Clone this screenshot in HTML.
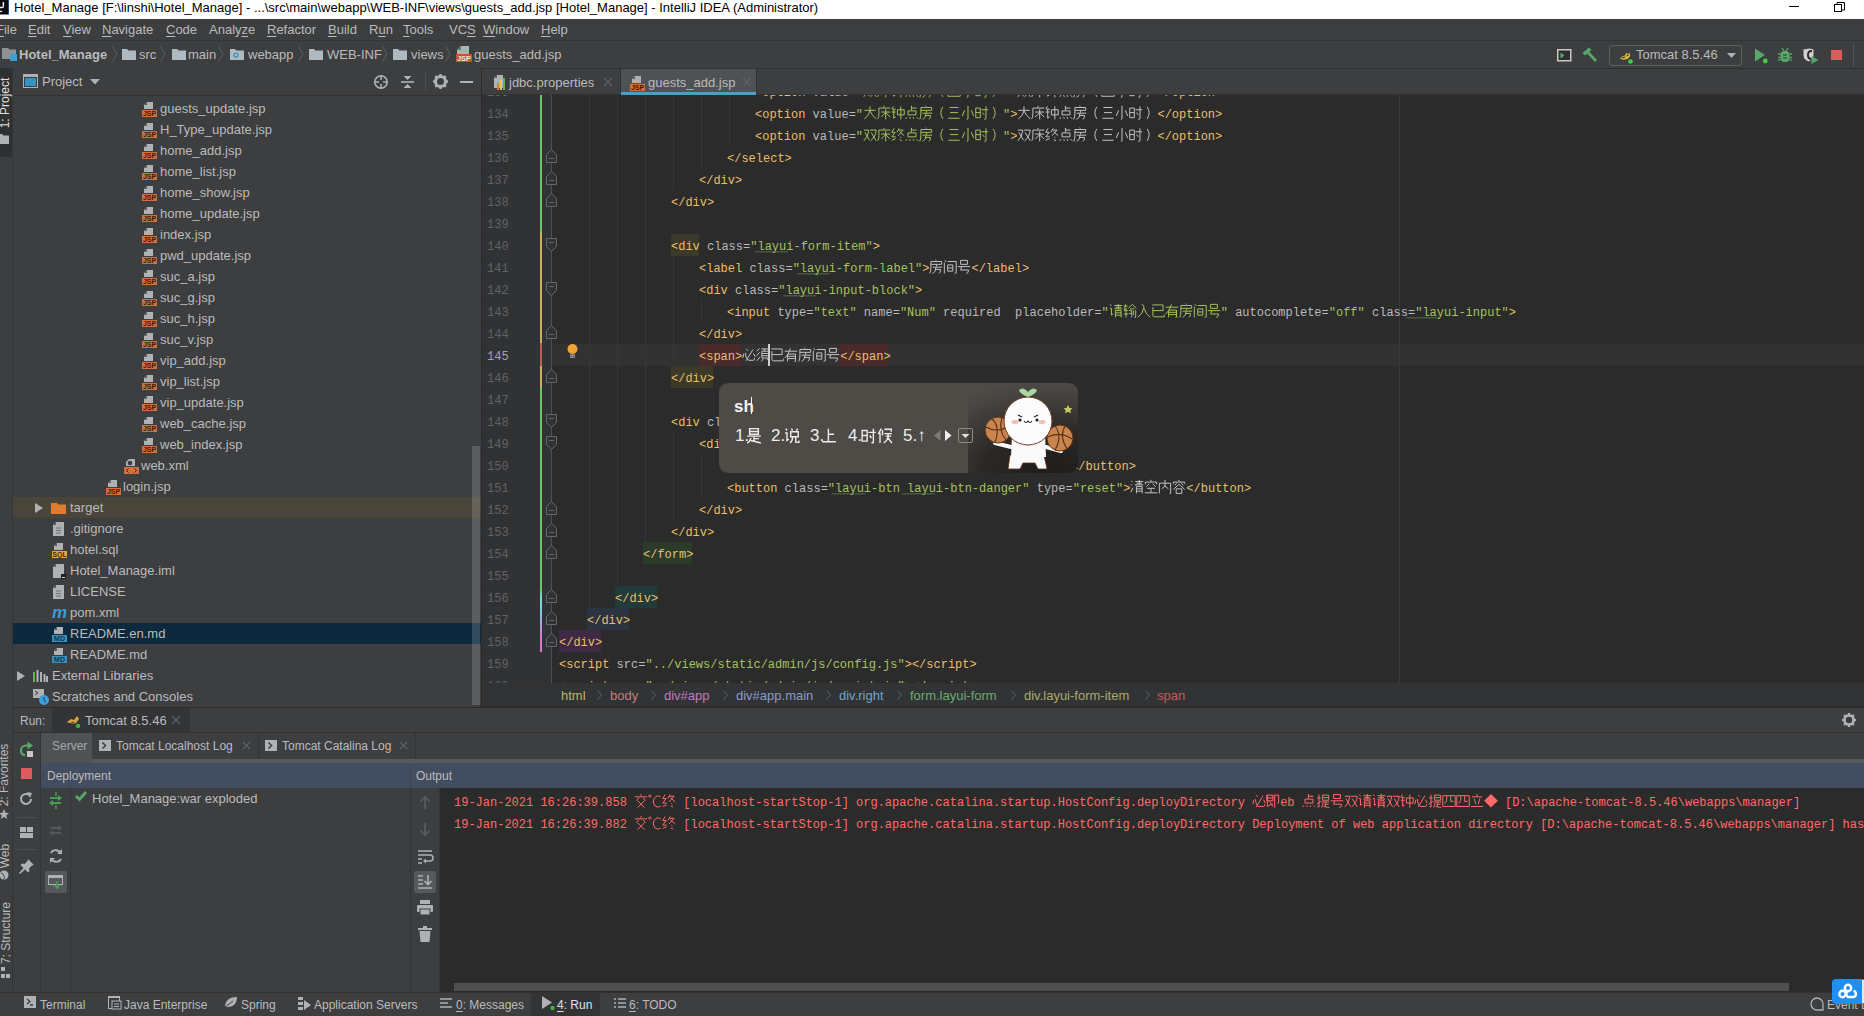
<!DOCTYPE html><html><head><meta charset="utf-8"><style>
*{margin:0;padding:0;box-sizing:border-box}
html,body{width:1864px;height:1016px;overflow:hidden;background:#3D3E40;font-family:"Liberation Sans",sans-serif;font-size:13px;color:#BBBBBB}
.a{position:absolute;white-space:pre}
.m{font-family:"Liberation Mono",monospace}
.u{text-decoration:underline;text-underline-offset:2px}
svg{position:absolute;overflow:visible}
svg.g{position:static;display:inline-block;vertical-align:top}
</style></head><body><div class="a" style="left:0px;top:0px;width:1864px;height:19px;background:#FFFFFF;"></div>
<svg style="left:0px;top:0px" width="9" height="15" viewBox="0 0 9 15"><rect x="-6" y="0" width="14.5" height="14.5" fill="#0A0A10"/><rect x="8" y="0" width="1" height="14.5" fill="#2A4A8A"/><path d="M3.4 2v4.5Q3.4 7.5 1.8 7.5H0" stroke="#F0F0F0" stroke-width="1.4" fill="none"/><rect x="0" y="10.8" width="2.2" height="1.3" fill="#F0F0F0"/></svg>
<div class="a" style="left:14px;top:-1px;font-size:13px;line-height:17px;color:#000000;">Hotel_Manage [F:\linshi\Hotel_Manage] - ...\src\main\webapp\WEB-INF\views\guests_add.jsp [Hotel_Manage] - IntelliJ IDEA (Administrator)</div>
<div class="a" style="left:1789px;top:6px;width:10px;height:1px;background:#000;"></div>
<svg style="left:1834px;top:1px" width="12" height="12" viewBox="0 0 12 12"><rect x="0.5" y="3.5" width="7" height="7" fill="none" stroke="#000"/><path d="M3 3.5V1.5h7.5V9H8" fill="none" stroke="#000"/></svg>
<div class="a" style="left:0px;top:19px;width:1864px;height:22px;background:#3D3E40;"></div>
<div class="a" style="left:0px;top:40px;width:1864px;height:1px;background:#333435;"></div>
<div class="a" style="left:-4px;top:21px;font-size:13px;line-height:17px;color:#BBBBBB;"><span class="u">F</span>ile</div>
<div class="a" style="left:28px;top:21px;font-size:13px;line-height:17px;color:#BBBBBB;"><span class="u">E</span>dit</div>
<div class="a" style="left:63px;top:21px;font-size:13px;line-height:17px;color:#BBBBBB;"><span class="u">V</span>iew</div>
<div class="a" style="left:102px;top:21px;font-size:13px;line-height:17px;color:#BBBBBB;"><span class="u">N</span>avigate</div>
<div class="a" style="left:166px;top:21px;font-size:13px;line-height:17px;color:#BBBBBB;"><span class="u">C</span>ode</div>
<div class="a" style="left:209px;top:21px;font-size:13px;line-height:17px;color:#BBBBBB;">Analy<span class="u">z</span>e</div>
<div class="a" style="left:267px;top:21px;font-size:13px;line-height:17px;color:#BBBBBB;"><span class="u">R</span>efactor</div>
<div class="a" style="left:328px;top:21px;font-size:13px;line-height:17px;color:#BBBBBB;"><span class="u">B</span>uild</div>
<div class="a" style="left:369px;top:21px;font-size:13px;line-height:17px;color:#BBBBBB;">R<span class="u">u</span>n</div>
<div class="a" style="left:403px;top:21px;font-size:13px;line-height:17px;color:#BBBBBB;"><span class="u">T</span>ools</div>
<div class="a" style="left:449px;top:21px;font-size:13px;line-height:17px;color:#BBBBBB;">VC<span class="u">S</span></div>
<div class="a" style="left:483px;top:21px;font-size:13px;line-height:17px;color:#BBBBBB;"><span class="u">W</span>indow</div>
<div class="a" style="left:541px;top:21px;font-size:13px;line-height:17px;color:#BBBBBB;"><span class="u">H</span>elp</div>
<div class="a" style="left:0px;top:41px;width:1864px;height:27px;background:#3D3E40;"></div>
<div class="a" style="left:0px;top:68px;width:1864px;height:1px;background:#323232;"></div>
<svg style="left:2px;top:47px" width="16" height="15" viewBox="0 0 16 15"><path d="M0 1h6l1.5 1.5H14V12H0z" fill="#8C9296"/><rect x="8" y="7" width="7" height="7" fill="#3BA0D8"/></svg>
<div class="a" style="left:19px;top:46px;font-size:13px;line-height:17px;color:#BBBBBB;font-weight:bold">Hotel_Manage</div>
<svg style="left:112px;top:46px" width="6" height="16" viewBox="0 0 6 16"><path d="M0.5 0.5L5 8L0.5 15.5" stroke="#5E6163" stroke-width="1" fill="none"/></svg>
<svg style="left:122px;top:48px" width="14" height="12" viewBox="0 0 14 12"><path d="M0 1h5l1.5 1.5H14V12H0z" fill="#AEB9C0"/></svg>
<div class="a" style="left:139px;top:46px;font-size:13px;line-height:17px;color:#BBBBBB;">src</div>
<svg style="left:160px;top:46px" width="6" height="16" viewBox="0 0 6 16"><path d="M0.5 0.5L5 8L0.5 15.5" stroke="#5E6163" stroke-width="1" fill="none"/></svg>
<svg style="left:172px;top:48px" width="14" height="12" viewBox="0 0 14 12"><path d="M0 1h5l1.5 1.5H14V12H0z" fill="#AEB9C0"/></svg>
<div class="a" style="left:188px;top:46px;font-size:13px;line-height:17px;color:#BBBBBB;">main</div>
<svg style="left:218px;top:46px" width="6" height="16" viewBox="0 0 6 16"><path d="M0.5 0.5L5 8L0.5 15.5" stroke="#5E6163" stroke-width="1" fill="none"/></svg>
<svg style="left:230px;top:48px" width="14" height="12" viewBox="0 0 14 12"><path d="M0 1h5l1.5 1.5H14V12H0z" fill="#AEB9C0"/><circle cx="6" cy="7" r="2.6" fill="#3592C4" stroke="#AEB9C0" stroke-width="0"/><circle cx="6" cy="7" r="1.3" fill="#AEB9C0"/></svg>
<div class="a" style="left:248px;top:46px;font-size:13px;line-height:17px;color:#BBBBBB;">webapp</div>
<svg style="left:298px;top:46px" width="6" height="16" viewBox="0 0 6 16"><path d="M0.5 0.5L5 8L0.5 15.5" stroke="#5E6163" stroke-width="1" fill="none"/></svg>
<svg style="left:309px;top:48px" width="14" height="12" viewBox="0 0 14 12"><path d="M0 1h5l1.5 1.5H14V12H0z" fill="#AEB9C0"/></svg>
<div class="a" style="left:327px;top:46px;font-size:13px;line-height:17px;color:#BBBBBB;">WEB-INF</div>
<svg style="left:382px;top:46px" width="6" height="16" viewBox="0 0 6 16"><path d="M0.5 0.5L5 8L0.5 15.5" stroke="#5E6163" stroke-width="1" fill="none"/></svg>
<svg style="left:393px;top:48px" width="14" height="12" viewBox="0 0 14 12"><path d="M0 1h5l1.5 1.5H14V12H0z" fill="#AEB9C0"/></svg>
<div class="a" style="left:411px;top:46px;font-size:13px;line-height:17px;color:#BBBBBB;">views</div>
<svg style="left:445px;top:46px" width="6" height="16" viewBox="0 0 6 16"><path d="M0.5 0.5L5 8L0.5 15.5" stroke="#5E6163" stroke-width="1" fill="none"/></svg>
<svg style="left:456px;top:46px" width="16" height="16" viewBox="0 0 16 16"><path d="M5 0h8v8H1V4z" fill="#AFB1B3"/><path d="M5 0v4H1z" fill="#6E6E6E"/><rect x="0" y="8" width="16" height="8" fill="#C7522A"/><text x="8" y="15" font-family="Liberation Sans" font-size="7.5" font-weight="bold" fill="#E8E8E8" text-anchor="middle">JSP</text></svg>
<div class="a" style="left:474px;top:46px;font-size:13px;line-height:17px;color:#BBBBBB;">guests_add.jsp</div>
<svg style="left:1557px;top:49px" width="15" height="13" viewBox="0 0 15 13"><rect x="0.75" y="0.75" width="13" height="11" fill="#2F3031" stroke="#C8C8C8" stroke-width="1.5"/><path d="M3.5 3.5l4 3-4 3z" fill="#59A869"/></svg>
<svg style="left:1582px;top:47px" width="16" height="16" viewBox="0 0 16 16"><path d="M0.5 6L7 0.5 9.5 3 3 8.5z" fill="#59A869"/><path d="M5 6.5L7 4.5 15 13 13 15z" fill="#59A869"/></svg>
<div class="a" style="left:1609px;top:45px;width:133px;height:21px;border:1px solid #5E6060;border-radius:3px"></div>
<svg style="left:1618px;top:49px" width="16" height="15" viewBox="0 0 16 15"><path d="M2 9.5Q4 7 7 6.5L8.5 3.5 10 5.5 12 3.5 12 7.5Q10.5 10 7 10.5 4 11 2 9.5z" fill="#D8B84A"/><path d="M4 9l3-1M8.5 7l2-1" stroke="#2A2010" stroke-width="1"/><circle cx="12.5" cy="12.5" r="2.3" fill="#3BD33B"/></svg>
<div class="a" style="left:1636px;top:46px;font-size:13px;line-height:17px;color:#BBBBBB;">Tomcat 8.5.46</div>
<svg style="left:1727px;top:53px" width="9" height="6" viewBox="0 0 9 6"><path d="M0 0h9L4.5 5z" fill="#AFB1B3"/></svg>
<svg style="left:1754px;top:48px" width="14" height="16" viewBox="0 0 14 16"><path d="M1 0.5l10 6.5-10 6.5z" fill="#59A869"/><circle cx="11.3" cy="13" r="2.4" fill="#3BD33B"/></svg>
<svg style="left:1778px;top:47px" width="14" height="16" viewBox="0 0 14 16"><path d="M4 1l2 3M10 1L8 4" stroke="#59A869" stroke-width="1.3"/><rect x="2.5" y="4" width="9" height="11" rx="4" fill="#59A869"/><path d="M0 7h2.5M11.5 7H14M0 10.5h2.5M11.5 10.5H14M0 13.5l2.5-1M14 13.5l-2.5-1" stroke="#59A869" stroke-width="1.3"/><path d="M5 8h4M5 11h4" stroke="#2F3031" stroke-width="1.2"/></svg>
<svg style="left:1803px;top:48px" width="17" height="16" viewBox="0 0 17 16"><path d="M0.5 1.5L6.5 0.5 10.5 1.5V7Q10.5 11.5 5.5 13.5 0.5 11.5 0.5 7z" fill="#D0D0D0"/><path d="M9 3Q5 2.5 5 7Q5 11 8.5 11" stroke="#2A2A2A" stroke-width="2" fill="none"/><path d="M8.5 8l7 4-7 4z" fill="#59A869"/></svg>
<div class="a" style="left:1831px;top:50px;width:11px;height:10px;background:#DB5C5C;"></div>
<div class="a" style="left:1853px;top:44px;width:1px;height:22px;background:#515658;"></div>
<div class="a" style="left:0px;top:68px;width:12px;height:924px;background:#3D3E40;"></div>
<div class="a" style="left:12px;top:68px;width:1px;height:924px;background:#333435;"></div>
<div class="a" style="left:0px;top:68px;width:12px;height:89px;background:#2F3031;"></div>
<div class="a" style="left:-25px;top:96px;width:60px;height:14px;font-size:12px;line-height:14px;color:#E0E0E0;transform:rotate(-90deg);transform-origin:30px 7px;text-align:center">1: Project</div>
<svg style="left:0px;top:134px" width="9" height="10" viewBox="0 0 9 10"><path d="M-3 0h5l1.5 1.5H9V10H-3z" fill="#AFB1B3"/></svg>
<div class="a" style="left:-28px;top:768px;width:64px;height:14px;font-size:12px;line-height:14px;color:#BBBBBB;transform:rotate(-90deg);transform-origin:32px 7px;text-align:center">2: Favorites</div>
<svg style="left:0px;top:809px" width="10" height="11" viewBox="0 0 10 11"><path d="M5 0l1.5 3.8 3.5.2-2.8 2.5 1 3.5L5 8 1.8 10l1-3.5L0 4l3.5-.2z" fill="#AFB1B3" transform="translate(-1,0)"/></svg>
<div class="a" style="left:-10px;top:849px;width:30px;height:14px;font-size:12px;line-height:14px;color:#BBBBBB;transform:rotate(-90deg);transform-origin:15px 7px;text-align:center">Web</div>
<svg style="left:0px;top:870px" width="10" height="10" viewBox="0 0 10 10"><circle cx="4" cy="5" r="4.5" fill="#AFB1B3"/><path d="M1 3c2 0 2 2 3 3s0 2 0 3" stroke="#3D3E40" fill="none"/></svg>
<div class="a" style="left:-28px;top:926px;width:68px;height:14px;font-size:12px;line-height:14px;color:#BBBBBB;transform:rotate(-90deg);transform-origin:34px 7px;text-align:center">7: Structure</div>
<svg style="left:0px;top:967px" width="10" height="12" viewBox="0 0 10 12"><rect x="1" y="0" width="4" height="4" fill="#AFB1B3"/><rect x="1" y="7" width="4" height="4" fill="#AFB1B3"/><rect x="6" y="7" width="4" height="4" fill="#AFB1B3"/></svg>
<div class="a" style="left:13px;top:68px;width:468px;height:639px;background:#3D3E40;"></div>
<div class="a" style="left:13px;top:95px;width:468px;height:1px;background:#323232;"></div>
<div class="a" style="left:481px;top:68px;width:1px;height:639px;background:#2B2B2B;"></div>
<svg style="left:23px;top:74px" width="15" height="14" viewBox="0 0 15 14"><rect x="0.5" y="0.5" width="14" height="13" fill="none" stroke="#AFB1B3"/><rect x="1" y="1" width="13" height="2" fill="#AFB1B3"/><rect x="2" y="4" width="11" height="8" fill="#3592C4"/></svg>
<div class="a" style="left:42px;top:73px;font-size:13px;line-height:17px;color:#BBBBBB;">Project</div>
<svg style="left:90px;top:79px" width="10" height="6" viewBox="0 0 10 6"><path d="M0 0h10L5 5.5z" fill="#AFB1B3"/></svg>
<svg style="left:373px;top:74px" width="16" height="16" viewBox="0 0 16 16"><circle cx="8" cy="8" r="6.2" fill="none" stroke="#AFB1B3" stroke-width="1.5"/><path d="M8 1v5M8 10v5M1 8h5M10 8h5" stroke="#AFB1B3" stroke-width="1.5"/></svg>
<svg style="left:400px;top:74px" width="15" height="16" viewBox="0 0 15 16"><path d="M1 8h13" stroke="#AFB1B3" stroke-width="1.6"/><path d="M4 2l3.5 3.5L11 2M4 14l3.5-3.5L11 14" fill="#AFB1B3" stroke="#AFB1B3"/></svg>
<div class="a" style="left:425px;top:72px;width:1px;height:20px;background:#4A4D4F;"></div>
<svg style="left:433px;top:74px" width="15" height="15" viewBox="0 0 15 15"><circle cx="7.5" cy="7.5" r="5" fill="none" stroke="#AFB1B3" stroke-width="3"/><path d="M7.5 0v3M7.5 12v3M0 7.5h3M12 7.5h3M2.2 2.2l2 2M10.8 10.8l2 2M12.8 2.2l-2 2M2.2 12.8l2-2" stroke="#AFB1B3" stroke-width="2.4"/><circle cx="7.5" cy="7.5" r="1.8" fill="#3D3E40"/></svg>
<div class="a" style="left:460px;top:81px;width:13px;height:2px;background:#AFB1B3;"></div>
<div class="a" style="left:13px;top:96px;width:468px;height:611px;overflow:hidden">
<svg style="left:129px;top:-15px" width="15" height="15" viewBox="0 0 15 15"><path d="M5 0h6v7H2V3z" fill="#AFB1B3"/><path d="M5 0v3H2z" fill="#5A5D5F"/><rect x="0" y="8" width="15" height="7" fill="#D0703F"/><text x="7.5" y="14.3" font-family="Liberation Sans" font-size="7" font-weight="bold" fill="#3B1A0A" text-anchor="middle">JSP</text></svg>
<svg style="left:129px;top:6px" width="15" height="15" viewBox="0 0 15 15"><path d="M5 0h6v7H2V3z" fill="#AFB1B3"/><path d="M5 0v3H2z" fill="#5A5D5F"/><rect x="0" y="8" width="15" height="7" fill="#D0703F"/><text x="7.5" y="14.3" font-family="Liberation Sans" font-size="7" font-weight="bold" fill="#3B1A0A" text-anchor="middle">JSP</text></svg>
<div class="a" style="left:147px;top:2px;font-size:13px;line-height:21px;color:#BBBBBB">guests_update.jsp</div>
<svg style="left:129px;top:27px" width="15" height="15" viewBox="0 0 15 15"><path d="M5 0h6v7H2V3z" fill="#AFB1B3"/><path d="M5 0v3H2z" fill="#5A5D5F"/><rect x="0" y="8" width="15" height="7" fill="#D0703F"/><text x="7.5" y="14.3" font-family="Liberation Sans" font-size="7" font-weight="bold" fill="#3B1A0A" text-anchor="middle">JSP</text></svg>
<div class="a" style="left:147px;top:23px;font-size:13px;line-height:21px;color:#BBBBBB">H_Type_update.jsp</div>
<svg style="left:129px;top:48px" width="15" height="15" viewBox="0 0 15 15"><path d="M5 0h6v7H2V3z" fill="#AFB1B3"/><path d="M5 0v3H2z" fill="#5A5D5F"/><rect x="0" y="8" width="15" height="7" fill="#D0703F"/><text x="7.5" y="14.3" font-family="Liberation Sans" font-size="7" font-weight="bold" fill="#3B1A0A" text-anchor="middle">JSP</text></svg>
<div class="a" style="left:147px;top:44px;font-size:13px;line-height:21px;color:#BBBBBB">home_add.jsp</div>
<svg style="left:129px;top:69px" width="15" height="15" viewBox="0 0 15 15"><path d="M5 0h6v7H2V3z" fill="#AFB1B3"/><path d="M5 0v3H2z" fill="#5A5D5F"/><rect x="0" y="8" width="15" height="7" fill="#D0703F"/><text x="7.5" y="14.3" font-family="Liberation Sans" font-size="7" font-weight="bold" fill="#3B1A0A" text-anchor="middle">JSP</text></svg>
<div class="a" style="left:147px;top:65px;font-size:13px;line-height:21px;color:#BBBBBB">home_list.jsp</div>
<svg style="left:129px;top:90px" width="15" height="15" viewBox="0 0 15 15"><path d="M5 0h6v7H2V3z" fill="#AFB1B3"/><path d="M5 0v3H2z" fill="#5A5D5F"/><rect x="0" y="8" width="15" height="7" fill="#D0703F"/><text x="7.5" y="14.3" font-family="Liberation Sans" font-size="7" font-weight="bold" fill="#3B1A0A" text-anchor="middle">JSP</text></svg>
<div class="a" style="left:147px;top:86px;font-size:13px;line-height:21px;color:#BBBBBB">home_show.jsp</div>
<svg style="left:129px;top:111px" width="15" height="15" viewBox="0 0 15 15"><path d="M5 0h6v7H2V3z" fill="#AFB1B3"/><path d="M5 0v3H2z" fill="#5A5D5F"/><rect x="0" y="8" width="15" height="7" fill="#D0703F"/><text x="7.5" y="14.3" font-family="Liberation Sans" font-size="7" font-weight="bold" fill="#3B1A0A" text-anchor="middle">JSP</text></svg>
<div class="a" style="left:147px;top:107px;font-size:13px;line-height:21px;color:#BBBBBB">home_update.jsp</div>
<svg style="left:129px;top:132px" width="15" height="15" viewBox="0 0 15 15"><path d="M5 0h6v7H2V3z" fill="#AFB1B3"/><path d="M5 0v3H2z" fill="#5A5D5F"/><rect x="0" y="8" width="15" height="7" fill="#D0703F"/><text x="7.5" y="14.3" font-family="Liberation Sans" font-size="7" font-weight="bold" fill="#3B1A0A" text-anchor="middle">JSP</text></svg>
<div class="a" style="left:147px;top:128px;font-size:13px;line-height:21px;color:#BBBBBB">index.jsp</div>
<svg style="left:129px;top:153px" width="15" height="15" viewBox="0 0 15 15"><path d="M5 0h6v7H2V3z" fill="#AFB1B3"/><path d="M5 0v3H2z" fill="#5A5D5F"/><rect x="0" y="8" width="15" height="7" fill="#D0703F"/><text x="7.5" y="14.3" font-family="Liberation Sans" font-size="7" font-weight="bold" fill="#3B1A0A" text-anchor="middle">JSP</text></svg>
<div class="a" style="left:147px;top:149px;font-size:13px;line-height:21px;color:#BBBBBB">pwd_update.jsp</div>
<svg style="left:129px;top:174px" width="15" height="15" viewBox="0 0 15 15"><path d="M5 0h6v7H2V3z" fill="#AFB1B3"/><path d="M5 0v3H2z" fill="#5A5D5F"/><rect x="0" y="8" width="15" height="7" fill="#D0703F"/><text x="7.5" y="14.3" font-family="Liberation Sans" font-size="7" font-weight="bold" fill="#3B1A0A" text-anchor="middle">JSP</text></svg>
<div class="a" style="left:147px;top:170px;font-size:13px;line-height:21px;color:#BBBBBB">suc_a.jsp</div>
<svg style="left:129px;top:195px" width="15" height="15" viewBox="0 0 15 15"><path d="M5 0h6v7H2V3z" fill="#AFB1B3"/><path d="M5 0v3H2z" fill="#5A5D5F"/><rect x="0" y="8" width="15" height="7" fill="#D0703F"/><text x="7.5" y="14.3" font-family="Liberation Sans" font-size="7" font-weight="bold" fill="#3B1A0A" text-anchor="middle">JSP</text></svg>
<div class="a" style="left:147px;top:191px;font-size:13px;line-height:21px;color:#BBBBBB">suc_g.jsp</div>
<svg style="left:129px;top:216px" width="15" height="15" viewBox="0 0 15 15"><path d="M5 0h6v7H2V3z" fill="#AFB1B3"/><path d="M5 0v3H2z" fill="#5A5D5F"/><rect x="0" y="8" width="15" height="7" fill="#D0703F"/><text x="7.5" y="14.3" font-family="Liberation Sans" font-size="7" font-weight="bold" fill="#3B1A0A" text-anchor="middle">JSP</text></svg>
<div class="a" style="left:147px;top:212px;font-size:13px;line-height:21px;color:#BBBBBB">suc_h.jsp</div>
<svg style="left:129px;top:237px" width="15" height="15" viewBox="0 0 15 15"><path d="M5 0h6v7H2V3z" fill="#AFB1B3"/><path d="M5 0v3H2z" fill="#5A5D5F"/><rect x="0" y="8" width="15" height="7" fill="#D0703F"/><text x="7.5" y="14.3" font-family="Liberation Sans" font-size="7" font-weight="bold" fill="#3B1A0A" text-anchor="middle">JSP</text></svg>
<div class="a" style="left:147px;top:233px;font-size:13px;line-height:21px;color:#BBBBBB">suc_v.jsp</div>
<svg style="left:129px;top:258px" width="15" height="15" viewBox="0 0 15 15"><path d="M5 0h6v7H2V3z" fill="#AFB1B3"/><path d="M5 0v3H2z" fill="#5A5D5F"/><rect x="0" y="8" width="15" height="7" fill="#D0703F"/><text x="7.5" y="14.3" font-family="Liberation Sans" font-size="7" font-weight="bold" fill="#3B1A0A" text-anchor="middle">JSP</text></svg>
<div class="a" style="left:147px;top:254px;font-size:13px;line-height:21px;color:#BBBBBB">vip_add.jsp</div>
<svg style="left:129px;top:279px" width="15" height="15" viewBox="0 0 15 15"><path d="M5 0h6v7H2V3z" fill="#AFB1B3"/><path d="M5 0v3H2z" fill="#5A5D5F"/><rect x="0" y="8" width="15" height="7" fill="#D0703F"/><text x="7.5" y="14.3" font-family="Liberation Sans" font-size="7" font-weight="bold" fill="#3B1A0A" text-anchor="middle">JSP</text></svg>
<div class="a" style="left:147px;top:275px;font-size:13px;line-height:21px;color:#BBBBBB">vip_list.jsp</div>
<svg style="left:129px;top:300px" width="15" height="15" viewBox="0 0 15 15"><path d="M5 0h6v7H2V3z" fill="#AFB1B3"/><path d="M5 0v3H2z" fill="#5A5D5F"/><rect x="0" y="8" width="15" height="7" fill="#D0703F"/><text x="7.5" y="14.3" font-family="Liberation Sans" font-size="7" font-weight="bold" fill="#3B1A0A" text-anchor="middle">JSP</text></svg>
<div class="a" style="left:147px;top:296px;font-size:13px;line-height:21px;color:#BBBBBB">vip_update.jsp</div>
<svg style="left:129px;top:321px" width="15" height="15" viewBox="0 0 15 15"><path d="M5 0h6v7H2V3z" fill="#AFB1B3"/><path d="M5 0v3H2z" fill="#5A5D5F"/><rect x="0" y="8" width="15" height="7" fill="#D0703F"/><text x="7.5" y="14.3" font-family="Liberation Sans" font-size="7" font-weight="bold" fill="#3B1A0A" text-anchor="middle">JSP</text></svg>
<div class="a" style="left:147px;top:317px;font-size:13px;line-height:21px;color:#BBBBBB">web_cache.jsp</div>
<svg style="left:129px;top:342px" width="15" height="15" viewBox="0 0 15 15"><path d="M5 0h6v7H2V3z" fill="#AFB1B3"/><path d="M5 0v3H2z" fill="#5A5D5F"/><rect x="0" y="8" width="15" height="7" fill="#D0703F"/><text x="7.5" y="14.3" font-family="Liberation Sans" font-size="7" font-weight="bold" fill="#3B1A0A" text-anchor="middle">JSP</text></svg>
<div class="a" style="left:147px;top:338px;font-size:13px;line-height:21px;color:#BBBBBB">web_index.jsp</div>
<svg style="left:111px;top:363px" width="15" height="15" viewBox="0 0 15 15"><path d="M5 0h6v7H2V3z" fill="#AFB1B3"/><circle cx="6" cy="4" r="2.3" fill="#3D3E40"/><rect x="0" y="8" width="15" height="7" fill="#D0703F"/><path d="M4.5 9.5L2.5 11.5l2 2M10.5 9.5l2 2-2 2" stroke="#3B1A0A" fill="none"/></svg>
<div class="a" style="left:128px;top:359px;font-size:13px;line-height:21px;color:#BBBBBB">web.xml</div>
<svg style="left:93px;top:384px" width="15" height="15" viewBox="0 0 15 15"><path d="M5 0h6v7H2V3z" fill="#AFB1B3"/><path d="M5 0v3H2z" fill="#5A5D5F"/><rect x="0" y="8" width="15" height="7" fill="#D0703F"/><text x="7.5" y="14.3" font-family="Liberation Sans" font-size="7" font-weight="bold" fill="#3B1A0A" text-anchor="middle">JSP</text></svg>
<div class="a" style="left:110px;top:380px;font-size:13px;line-height:21px;color:#BBBBBB">login.jsp</div>
<div class="a" style="left:0px;top:401px;width:468px;height:21px;background:#49453A"></div>
<svg style="left:22px;top:407px" width="8" height="10" viewBox="0 0 8 10"><path d="M0 0l8 5-8 5z" fill="#AFB1B3"/></svg>
<svg style="left:38px;top:406px" width="15" height="12" viewBox="0 0 15 12"><path d="M0 1h6l1.5 1.5H15V12H0z" fill="#E07A2E"/></svg>
<div class="a" style="left:57px;top:401px;font-size:13px;line-height:21px;color:#BBBBBB">target</div>
<svg style="left:40px;top:426px" width="11" height="14" viewBox="0 0 11 14"><path d="M3 0h8v14H0V3z" fill="#AFB1B3"/><path d="M3 0v3H0z" fill="#5A5D5F"/><path d="M3 6h5M3 8.5h5M3 11h5" stroke="#6E7072"/></svg>
<div class="a" style="left:57px;top:422px;font-size:13px;line-height:21px;color:#BBBBBB">.gitignore</div>
<svg style="left:39px;top:447px" width="15" height="15" viewBox="0 0 15 15"><path d="M5 0h6v7H2V3z" fill="#AFB1B3"/><path d="M5 0v3H2z" fill="#5A5D5F"/><rect x="0" y="8" width="15" height="7" fill="#E8A93A"/><text x="7.5" y="14.3" font-family="Liberation Sans" font-size="7" font-weight="bold" fill="#3B2A0A" text-anchor="middle">SQL</text></svg>
<div class="a" style="left:57px;top:443px;font-size:13px;line-height:21px;color:#BBBBBB">hotel.sql</div>
<svg style="left:40px;top:468px" width="12" height="15" viewBox="0 0 12 15"><path d="M3 0h8v14H0V3z" fill="#AFB1B3"/><path d="M3 0v3H0z" fill="#5A5D5F"/><rect x="8" y="10" width="5" height="5" fill="#1E1E1E"/><rect x="9" y="13" width="3" height="1" fill="#ddd"/></svg>
<div class="a" style="left:57px;top:464px;font-size:13px;line-height:21px;color:#BBBBBB">Hotel_Manage.iml</div>
<svg style="left:40px;top:489px" width="11" height="14" viewBox="0 0 11 14"><path d="M3 0h8v14H0V3z" fill="#AFB1B3"/><path d="M3 0v3H0z" fill="#5A5D5F"/><path d="M3 6h5M3 8.5h5M3 11h5" stroke="#6E7072"/></svg>
<div class="a" style="left:57px;top:485px;font-size:13px;line-height:21px;color:#BBBBBB">LICENSE</div>
<div class="a" style="left:39px;top:506px;font-size:17px;line-height:21px;color:#3B9BD8;font-style:italic;font-weight:bold">m</div>
<div class="a" style="left:57px;top:506px;font-size:13px;line-height:21px;color:#BBBBBB">pom.xml</div>
<div class="a" style="left:0px;top:527px;width:468px;height:21px;background:#0D293E"></div>
<svg style="left:39px;top:531px" width="15" height="15" viewBox="0 0 15 15"><path d="M5 0h6v7H2V3z" fill="#AFB1B3"/><path d="M5 0v3H2z" fill="#5A5D5F"/><rect x="0" y="8" width="15" height="7" fill="#3D8FB8"/><text x="7.5" y="14.3" font-family="Liberation Sans" font-size="7" font-weight="bold" fill="#10364A" text-anchor="middle">MD</text></svg>
<div class="a" style="left:57px;top:527px;font-size:13px;line-height:21px;color:#BBBBBB">README.en.md</div>
<svg style="left:39px;top:552px" width="15" height="15" viewBox="0 0 15 15"><path d="M5 0h6v7H2V3z" fill="#AFB1B3"/><path d="M5 0v3H2z" fill="#5A5D5F"/><rect x="0" y="8" width="15" height="7" fill="#3D8FB8"/><text x="7.5" y="14.3" font-family="Liberation Sans" font-size="7" font-weight="bold" fill="#10364A" text-anchor="middle">MD</text></svg>
<div class="a" style="left:57px;top:548px;font-size:13px;line-height:21px;color:#BBBBBB">README.md</div>
<svg style="left:4px;top:575px" width="8" height="10" viewBox="0 0 8 10"><path d="M0 0l8 5-8 5z" fill="#AFB1B3"/></svg>
<svg style="left:20px;top:574px" width="15" height="12" viewBox="0 0 15 12"><rect x="0" y="2" width="2" height="10" fill="#62B543"/><rect x="3.5" y="0" width="2" height="12" fill="#AFB1B3"/><rect x="7" y="2" width="2" height="10" fill="#AFB1B3"/><rect x="10.5" y="4" width="2" height="8" fill="#AFB1B3"/><rect x="13" y="6" width="2" height="6" fill="#AFB1B3"/></svg>
<div class="a" style="left:39px;top:569px;font-size:13px;line-height:21px;color:#BBBBBB">External Libraries</div>
<svg style="left:20px;top:593px" width="16" height="16" viewBox="0 0 16 16"><rect x="0" y="0" width="11" height="9" fill="#AFB1B3"/><path d="M2 2l3 2-3 2" stroke="#3D3E40" fill="none"/><circle cx="11" cy="11" r="5" fill="#3BA0D8"/><path d="M11 8v3.5l2 1.5" stroke="#1E3A50" fill="none"/></svg>
<div class="a" style="left:39px;top:590px;font-size:13px;line-height:21px;color:#BBBBBB">Scratches and Consoles</div>
<div class="a" style="left:459px;top:350px;width:8px;height:259px;background:rgba(255,255,255,0.16)"></div>
</div>
<div class="a" style="left:482px;top:68px;width:1382px;height:27px;background:#3D3E40;"></div>
<div class="a" style="left:482px;top:68px;width:1382px;height:1px;background:#303132;"></div>
<div class="a" style="left:482px;top:94px;width:1382px;height:1px;background:#323232;"></div>
<div class="a" style="left:621px;top:69px;width:135px;height:26px;background:#4E5254;"></div>
<div class="a" style="left:621px;top:92px;width:135px;height:3px;background:#4A9FC5;"></div>
<div class="a" style="left:620px;top:69px;width:1px;height:26px;background:#323232;"></div>
<div class="a" style="left:756px;top:69px;width:1px;height:26px;background:#323232;"></div>
<svg style="left:493px;top:75px" width="14" height="15" viewBox="0 0 14 15"><path d="M4 0h6v13H1V3z" fill="#AFB1B3"/><path d="M4 0v3H1z" fill="#5A5D5F"/><rect x="4" y="8" width="2" height="7" fill="#E07A2E"/><rect x="7" y="5" width="2" height="10" fill="#E8C46A"/><rect x="10" y="3" width="2" height="12" fill="#62B543"/></svg>
<div class="a" style="left:509px;top:74px;font-size:13px;line-height:17px;color:#BBBBBB;">jdbc.properties</div>
<svg style="left:604px;top:78px" width="8" height="8" viewBox="0 0 8 8"><path d="M0 0l8 8M8 0L0 8" stroke="#5F6163" stroke-width="1.2"/></svg>
<svg style="left:630px;top:76px" width="15" height="15" viewBox="0 0 15 15"><path d="M5 0h6v7H2V3z" fill="#AFB1B3"/><path d="M5 0v3H2z" fill="#5A5D5F"/><rect x="0" y="8" width="15" height="7" fill="#D0703F"/><text x="7.5" y="14.3" font-family="Liberation Sans" font-size="7" font-weight="bold" fill="#3B1A0A" text-anchor="middle">JSP</text></svg>
<div class="a" style="left:648px;top:74px;font-size:13px;line-height:17px;color:#BBBBBB;">guests_add.jsp</div>
<svg style="left:743px;top:78px" width="8" height="8" viewBox="0 0 8 8"><path d="M0 0l8 8M8 0L0 8" stroke="#5F6163" stroke-width="1.2"/></svg>
<div class="a" style="left:482px;top:95px;width:1382px;height:588px;background:#2B2B2B;overflow:hidden">
<div class="a" style="left:0px;top:0px;width:4px;height:588px;background:#303132;"></div>
<div class="a" style="left:4px;top:0px;width:66px;height:588px;background:#313234;"></div>
<div class="a" style="left:70px;top:249px;width:1312px;height:22px;background:#323232;"></div>
<div class="a" style="left:917px;top:0px;width:1px;height:588px;background:#393939;"></div>
<div class="a" style="left:107px;top:-15px;width:1px;height:22px;background:#373737;"></div>
<div class="a" style="left:135px;top:-15px;width:1px;height:22px;background:#373737;"></div>
<div class="a" style="left:163px;top:-15px;width:1px;height:22px;background:#373737;"></div>
<div class="a" style="left:191px;top:-15px;width:1px;height:22px;background:#373737;"></div>
<div class="a" style="left:219px;top:-15px;width:1px;height:22px;background:#373737;"></div>
<div class="a" style="left:247px;top:-15px;width:1px;height:22px;background:#373737;"></div>
<div class="a" style="left:107px;top:7px;width:1px;height:22px;background:#373737;"></div>
<div class="a" style="left:135px;top:7px;width:1px;height:22px;background:#373737;"></div>
<div class="a" style="left:163px;top:7px;width:1px;height:22px;background:#373737;"></div>
<div class="a" style="left:191px;top:7px;width:1px;height:22px;background:#373737;"></div>
<div class="a" style="left:219px;top:7px;width:1px;height:22px;background:#373737;"></div>
<div class="a" style="left:247px;top:7px;width:1px;height:22px;background:#373737;"></div>
<div class="a" style="left:107px;top:29px;width:1px;height:22px;background:#373737;"></div>
<div class="a" style="left:135px;top:29px;width:1px;height:22px;background:#373737;"></div>
<div class="a" style="left:163px;top:29px;width:1px;height:22px;background:#373737;"></div>
<div class="a" style="left:191px;top:29px;width:1px;height:22px;background:#373737;"></div>
<div class="a" style="left:219px;top:29px;width:1px;height:22px;background:#373737;"></div>
<div class="a" style="left:247px;top:29px;width:1px;height:22px;background:#373737;"></div>
<div class="a" style="left:107px;top:51px;width:1px;height:22px;background:#373737;"></div>
<div class="a" style="left:135px;top:51px;width:1px;height:22px;background:#373737;"></div>
<div class="a" style="left:163px;top:51px;width:1px;height:22px;background:#373737;"></div>
<div class="a" style="left:191px;top:51px;width:1px;height:22px;background:#373737;"></div>
<div class="a" style="left:219px;top:51px;width:1px;height:22px;background:#373737;"></div>
<div class="a" style="left:107px;top:73px;width:1px;height:22px;background:#373737;"></div>
<div class="a" style="left:135px;top:73px;width:1px;height:22px;background:#373737;"></div>
<div class="a" style="left:163px;top:73px;width:1px;height:22px;background:#373737;"></div>
<div class="a" style="left:191px;top:73px;width:1px;height:22px;background:#373737;"></div>
<div class="a" style="left:107px;top:95px;width:1px;height:22px;background:#373737;"></div>
<div class="a" style="left:135px;top:95px;width:1px;height:22px;background:#373737;"></div>
<div class="a" style="left:163px;top:95px;width:1px;height:22px;background:#373737;"></div>
<div class="a" style="left:107px;top:117px;width:1px;height:22px;background:#373737;"></div>
<div class="a" style="left:135px;top:117px;width:1px;height:22px;background:#373737;"></div>
<div class="a" style="left:163px;top:117px;width:1px;height:22px;background:#373737;"></div>
<div class="a" style="left:107px;top:139px;width:1px;height:22px;background:#373737;"></div>
<div class="a" style="left:135px;top:139px;width:1px;height:22px;background:#373737;"></div>
<div class="a" style="left:163px;top:139px;width:1px;height:22px;background:#373737;"></div>
<div class="a" style="left:107px;top:161px;width:1px;height:22px;background:#373737;"></div>
<div class="a" style="left:135px;top:161px;width:1px;height:22px;background:#373737;"></div>
<div class="a" style="left:163px;top:161px;width:1px;height:22px;background:#373737;"></div>
<div class="a" style="left:191px;top:161px;width:1px;height:22px;background:#373737;"></div>
<div class="a" style="left:107px;top:183px;width:1px;height:22px;background:#373737;"></div>
<div class="a" style="left:135px;top:183px;width:1px;height:22px;background:#373737;"></div>
<div class="a" style="left:163px;top:183px;width:1px;height:22px;background:#373737;"></div>
<div class="a" style="left:191px;top:183px;width:1px;height:22px;background:#373737;"></div>
<div class="a" style="left:107px;top:205px;width:1px;height:22px;background:#373737;"></div>
<div class="a" style="left:135px;top:205px;width:1px;height:22px;background:#373737;"></div>
<div class="a" style="left:163px;top:205px;width:1px;height:22px;background:#373737;"></div>
<div class="a" style="left:191px;top:205px;width:1px;height:22px;background:#373737;"></div>
<div class="a" style="left:219px;top:205px;width:1px;height:22px;background:#373737;"></div>
<div class="a" style="left:107px;top:227px;width:1px;height:22px;background:#373737;"></div>
<div class="a" style="left:135px;top:227px;width:1px;height:22px;background:#373737;"></div>
<div class="a" style="left:163px;top:227px;width:1px;height:22px;background:#373737;"></div>
<div class="a" style="left:191px;top:227px;width:1px;height:22px;background:#373737;"></div>
<div class="a" style="left:107px;top:249px;width:1px;height:22px;background:#373737;"></div>
<div class="a" style="left:135px;top:249px;width:1px;height:22px;background:#373737;"></div>
<div class="a" style="left:163px;top:249px;width:1px;height:22px;background:#373737;"></div>
<div class="a" style="left:191px;top:249px;width:1px;height:22px;background:#373737;"></div>
<div class="a" style="left:107px;top:271px;width:1px;height:22px;background:#373737;"></div>
<div class="a" style="left:135px;top:271px;width:1px;height:22px;background:#373737;"></div>
<div class="a" style="left:163px;top:271px;width:1px;height:22px;background:#373737;"></div>
<div class="a" style="left:107px;top:293px;width:1px;height:22px;background:#373737;"></div>
<div class="a" style="left:135px;top:293px;width:1px;height:22px;background:#373737;"></div>
<div class="a" style="left:163px;top:293px;width:1px;height:22px;background:#373737;"></div>
<div class="a" style="left:107px;top:315px;width:1px;height:22px;background:#373737;"></div>
<div class="a" style="left:135px;top:315px;width:1px;height:22px;background:#373737;"></div>
<div class="a" style="left:163px;top:315px;width:1px;height:22px;background:#373737;"></div>
<div class="a" style="left:107px;top:337px;width:1px;height:22px;background:#373737;"></div>
<div class="a" style="left:135px;top:337px;width:1px;height:22px;background:#373737;"></div>
<div class="a" style="left:163px;top:337px;width:1px;height:22px;background:#373737;"></div>
<div class="a" style="left:191px;top:337px;width:1px;height:22px;background:#373737;"></div>
<div class="a" style="left:107px;top:359px;width:1px;height:22px;background:#373737;"></div>
<div class="a" style="left:135px;top:359px;width:1px;height:22px;background:#373737;"></div>
<div class="a" style="left:163px;top:359px;width:1px;height:22px;background:#373737;"></div>
<div class="a" style="left:191px;top:359px;width:1px;height:22px;background:#373737;"></div>
<div class="a" style="left:219px;top:359px;width:1px;height:22px;background:#373737;"></div>
<div class="a" style="left:107px;top:381px;width:1px;height:22px;background:#373737;"></div>
<div class="a" style="left:135px;top:381px;width:1px;height:22px;background:#373737;"></div>
<div class="a" style="left:163px;top:381px;width:1px;height:22px;background:#373737;"></div>
<div class="a" style="left:191px;top:381px;width:1px;height:22px;background:#373737;"></div>
<div class="a" style="left:219px;top:381px;width:1px;height:22px;background:#373737;"></div>
<div class="a" style="left:107px;top:403px;width:1px;height:22px;background:#373737;"></div>
<div class="a" style="left:135px;top:403px;width:1px;height:22px;background:#373737;"></div>
<div class="a" style="left:163px;top:403px;width:1px;height:22px;background:#373737;"></div>
<div class="a" style="left:191px;top:403px;width:1px;height:22px;background:#373737;"></div>
<div class="a" style="left:107px;top:425px;width:1px;height:22px;background:#373737;"></div>
<div class="a" style="left:135px;top:425px;width:1px;height:22px;background:#373737;"></div>
<div class="a" style="left:163px;top:425px;width:1px;height:22px;background:#373737;"></div>
<div class="a" style="left:107px;top:447px;width:1px;height:22px;background:#373737;"></div>
<div class="a" style="left:135px;top:447px;width:1px;height:22px;background:#373737;"></div>
<div class="a" style="left:107px;top:469px;width:1px;height:22px;background:#373737;"></div>
<div class="a" style="left:135px;top:469px;width:1px;height:22px;background:#373737;"></div>
<div class="a" style="left:107px;top:491px;width:1px;height:22px;background:#373737;"></div>
<div class="a" style="left:189px;top:139px;width:28px;height:22px;background:#3B3A28;"></div>
<div class="a" style="left:189px;top:271px;width:42px;height:22px;background:#3B3A28;"></div>
<div class="a" style="left:217px;top:249px;width:42px;height:22px;background:#4A2B2B;"></div>
<div class="a" style="left:357px;top:249px;width:49px;height:22px;background:#4A2B2B;"></div>
<div class="a" style="left:161px;top:447px;width:49px;height:22px;background:#2A3B2A;"></div>
<div class="a" style="left:133px;top:491px;width:42px;height:22px;background:#213A3A;"></div>
<div class="a" style="left:105px;top:513px;width:42px;height:22px;background:#2B3440;"></div>
<div class="a" style="left:77px;top:535px;width:42px;height:22px;background:#3F2A45;"></div>
<div class="a" style="left:58px;top:0px;width:2px;height:137px;background:#6CC46C;"></div>
<div class="a" style="left:58px;top:137px;width:2px;height:111px;background:#C8B45A;"></div>
<div class="a" style="left:58px;top:248px;width:2px;height:23px;background:#C05A5A;"></div>
<div class="a" style="left:58px;top:271px;width:2px;height:21px;background:#C8B45A;"></div>
<div class="a" style="left:58px;top:292px;width:2px;height:200px;background:#6CC46C;"></div>
<div class="a" style="left:58px;top:492px;width:2px;height:65px;background:linear-gradient(#6CC46C,#74D8D8 12px,#74D8D8 20px,#A8A8E0 35px,#D478D4 50px,#D478D4)"></div>
<div class="a" style="left:69px;top:0px;width:1px;height:588px;background:#4E5052;"></div>
<svg style="left:64px;top:54px" width="11" height="14" viewBox="0 0 11 14"><path d="M0.5 13.5V5.5L5.5 0.5L10.5 5.5V13.5z" fill="#313234" stroke="#65686A"/><path d="M3 9.5h5" stroke="#65686A"/></svg>
<svg style="left:64px;top:76px" width="11" height="14" viewBox="0 0 11 14"><path d="M0.5 13.5V5.5L5.5 0.5L10.5 5.5V13.5z" fill="#313234" stroke="#65686A"/><path d="M3 9.5h5" stroke="#65686A"/></svg>
<svg style="left:64px;top:98px" width="11" height="14" viewBox="0 0 11 14"><path d="M0.5 13.5V5.5L5.5 0.5L10.5 5.5V13.5z" fill="#313234" stroke="#65686A"/><path d="M3 9.5h5" stroke="#65686A"/></svg>
<svg style="left:64px;top:230px" width="11" height="14" viewBox="0 0 11 14"><path d="M0.5 13.5V5.5L5.5 0.5L10.5 5.5V13.5z" fill="#313234" stroke="#65686A"/><path d="M3 9.5h5" stroke="#65686A"/></svg>
<svg style="left:64px;top:274px" width="11" height="14" viewBox="0 0 11 14"><path d="M0.5 13.5V5.5L5.5 0.5L10.5 5.5V13.5z" fill="#313234" stroke="#65686A"/><path d="M3 9.5h5" stroke="#65686A"/></svg>
<svg style="left:64px;top:406px" width="11" height="14" viewBox="0 0 11 14"><path d="M0.5 13.5V5.5L5.5 0.5L10.5 5.5V13.5z" fill="#313234" stroke="#65686A"/><path d="M3 9.5h5" stroke="#65686A"/></svg>
<svg style="left:64px;top:428px" width="11" height="14" viewBox="0 0 11 14"><path d="M0.5 13.5V5.5L5.5 0.5L10.5 5.5V13.5z" fill="#313234" stroke="#65686A"/><path d="M3 9.5h5" stroke="#65686A"/></svg>
<svg style="left:64px;top:450px" width="11" height="14" viewBox="0 0 11 14"><path d="M0.5 13.5V5.5L5.5 0.5L10.5 5.5V13.5z" fill="#313234" stroke="#65686A"/><path d="M3 9.5h5" stroke="#65686A"/></svg>
<svg style="left:64px;top:494px" width="11" height="14" viewBox="0 0 11 14"><path d="M0.5 13.5V5.5L5.5 0.5L10.5 5.5V13.5z" fill="#313234" stroke="#65686A"/><path d="M3 9.5h5" stroke="#65686A"/></svg>
<svg style="left:64px;top:516px" width="11" height="14" viewBox="0 0 11 14"><path d="M0.5 13.5V5.5L5.5 0.5L10.5 5.5V13.5z" fill="#313234" stroke="#65686A"/><path d="M3 9.5h5" stroke="#65686A"/></svg>
<svg style="left:64px;top:538px" width="11" height="14" viewBox="0 0 11 14"><path d="M0.5 13.5V5.5L5.5 0.5L10.5 5.5V13.5z" fill="#313234" stroke="#65686A"/><path d="M3 9.5h5" stroke="#65686A"/></svg>
<svg style="left:64px;top:143px" width="11" height="14" viewBox="0 0 11 14"><path d="M0.5 0.5H10.5V8.5L5.5 13.5L0.5 8.5z" fill="#313234" stroke="#65686A"/><path d="M3 4.5h5" stroke="#65686A"/></svg>
<svg style="left:64px;top:187px" width="11" height="14" viewBox="0 0 11 14"><path d="M0.5 0.5H10.5V8.5L5.5 13.5L0.5 8.5z" fill="#313234" stroke="#65686A"/><path d="M3 4.5h5" stroke="#65686A"/></svg>
<svg style="left:64px;top:319px" width="11" height="14" viewBox="0 0 11 14"><path d="M0.5 0.5H10.5V8.5L5.5 13.5L0.5 8.5z" fill="#313234" stroke="#65686A"/><path d="M3 4.5h5" stroke="#65686A"/></svg>
<svg style="left:64px;top:341px" width="11" height="14" viewBox="0 0 11 14"><path d="M0.5 0.5H10.5V8.5L5.5 13.5L0.5 8.5z" fill="#313234" stroke="#65686A"/><path d="M3 4.5h5" stroke="#65686A"/></svg>
<div class="a m" style="left:5px;top:-13px;width:22px;font-size:12px;line-height:22px;letter-spacing:0px;color:#606366">133</div>
<div class="a m" style="left:5px;top:9px;width:22px;font-size:12px;line-height:22px;letter-spacing:0px;color:#606366">134</div>
<div class="a m" style="left:5px;top:31px;width:22px;font-size:12px;line-height:22px;letter-spacing:0px;color:#606366">135</div>
<div class="a m" style="left:5px;top:53px;width:22px;font-size:12px;line-height:22px;letter-spacing:0px;color:#606366">136</div>
<div class="a m" style="left:5px;top:75px;width:22px;font-size:12px;line-height:22px;letter-spacing:0px;color:#606366">137</div>
<div class="a m" style="left:5px;top:97px;width:22px;font-size:12px;line-height:22px;letter-spacing:0px;color:#606366">138</div>
<div class="a m" style="left:5px;top:119px;width:22px;font-size:12px;line-height:22px;letter-spacing:0px;color:#606366">139</div>
<div class="a m" style="left:5px;top:141px;width:22px;font-size:12px;line-height:22px;letter-spacing:0px;color:#606366">140</div>
<div class="a m" style="left:5px;top:163px;width:22px;font-size:12px;line-height:22px;letter-spacing:0px;color:#606366">141</div>
<div class="a m" style="left:5px;top:185px;width:22px;font-size:12px;line-height:22px;letter-spacing:0px;color:#606366">142</div>
<div class="a m" style="left:5px;top:207px;width:22px;font-size:12px;line-height:22px;letter-spacing:0px;color:#606366">143</div>
<div class="a m" style="left:5px;top:229px;width:22px;font-size:12px;line-height:22px;letter-spacing:0px;color:#606366">144</div>
<div class="a m" style="left:5px;top:251px;width:22px;font-size:12px;line-height:22px;letter-spacing:0px;color:#A4A3A3">145</div>
<div class="a m" style="left:5px;top:273px;width:22px;font-size:12px;line-height:22px;letter-spacing:0px;color:#606366">146</div>
<div class="a m" style="left:5px;top:295px;width:22px;font-size:12px;line-height:22px;letter-spacing:0px;color:#606366">147</div>
<div class="a m" style="left:5px;top:317px;width:22px;font-size:12px;line-height:22px;letter-spacing:0px;color:#606366">148</div>
<div class="a m" style="left:5px;top:339px;width:22px;font-size:12px;line-height:22px;letter-spacing:0px;color:#606366">149</div>
<div class="a m" style="left:5px;top:361px;width:22px;font-size:12px;line-height:22px;letter-spacing:0px;color:#606366">150</div>
<div class="a m" style="left:5px;top:383px;width:22px;font-size:12px;line-height:22px;letter-spacing:0px;color:#606366">151</div>
<div class="a m" style="left:5px;top:405px;width:22px;font-size:12px;line-height:22px;letter-spacing:0px;color:#606366">152</div>
<div class="a m" style="left:5px;top:427px;width:22px;font-size:12px;line-height:22px;letter-spacing:0px;color:#606366">153</div>
<div class="a m" style="left:5px;top:449px;width:22px;font-size:12px;line-height:22px;letter-spacing:0px;color:#606366">154</div>
<div class="a m" style="left:5px;top:471px;width:22px;font-size:12px;line-height:22px;letter-spacing:0px;color:#606366">155</div>
<div class="a m" style="left:5px;top:493px;width:22px;font-size:12px;line-height:22px;letter-spacing:0px;color:#606366">156</div>
<div class="a m" style="left:5px;top:515px;width:22px;font-size:12px;line-height:22px;letter-spacing:0px;color:#606366">157</div>
<div class="a m" style="left:5px;top:537px;width:22px;font-size:12px;line-height:22px;letter-spacing:0px;color:#606366">158</div>
<div class="a m" style="left:5px;top:559px;width:22px;font-size:12px;line-height:22px;letter-spacing:0px;color:#606366">159</div>
<div class="a m" style="left:5px;top:581px;width:22px;font-size:12px;line-height:22px;letter-spacing:0px;color:#606366">160</div>
<svg style="left:85px;top:249px" width="12" height="15" viewBox="0 0 12 15"><circle cx="5.5" cy="5" r="5" fill="#F0A732"/><rect x="3" y="10.5" width="5" height="1.2" fill="#AFB1B3"/><rect x="3" y="12.5" width="5" height="1.2" fill="#AFB1B3"/></svg>
<div class="a m" style="left:273px;top:-13px;font-size:12px;line-height:22px;letter-spacing:0px"><span style="color:#E8BF6A">&lt;option</span><span style="color:#BABABA"> value=</span><span style="color:#A5C25C">"</span><svg class="g" width="140" height="22" viewBox="0 0 140 22"><path transform="translate(0.20,1.8) scale(1.133)" d="M0.5 2H5Q4.5 8 0.5 11.5 M1.5 4L5.5 11 M6 2H11.5Q11 8 6.5 11.5 M7 4L11.5 11.5" fill="none" stroke="#A5C25C" stroke-width="0.882"/><path transform="translate(14.20,1.8) scale(1.133)" d="M6 0V1.5 M1.5 2H11.5 M1.5 2V7Q1.5 10 0.5 11.5 M3.5 5.5H11.5 M7.5 3V12 M7.5 6L3.5 10 M7.5 6L11.5 10" fill="none" stroke="#A5C25C" stroke-width="0.882"/><path transform="translate(28.20,1.8) scale(1.133)" d="M2 0.5L0.5 3 M1 3H4 M0.5 5.5H4 M2.2 3V11L4 9.5 M5.5 3.5H11.5V8H5.5Z M8.5 0.5V12" fill="none" stroke="#A5C25C" stroke-width="0.882"/><path transform="translate(42.20,1.8) scale(1.133)" d="M5.5 0V4 M5.5 2H10 M2.5 4.5H9.5V8H2.5Z M1.5 10L0.5 11.5 M4 10L4.5 11.5 M7 10L7.5 11.5 M10 10L11.5 11.5" fill="none" stroke="#A5C25C" stroke-width="0.882"/><path transform="translate(56.20,1.8) scale(1.133)" d="M5.5 0L6.5 1 M1.5 1.5H11 M1.5 4H11 M11 1.5V4 M1.5 1.5V7Q1.5 10 0.5 12 M6.5 4.5V6 M3 6.5H11.5 M6 6.5Q6 11 3 12 M6 8.5H10Q10 11.5 8.5 12" fill="none" stroke="#A5C25C" stroke-width="0.882"/><path transform="translate(70.20,1.8) scale(1.133)" d="M8.5 1Q5 6 8.5 11.5" fill="none" stroke="#A5C25C" stroke-width="0.882"/><path transform="translate(84.20,1.8) scale(1.133)" d="M0.5 1.5H11.5V11H0.5Z M4 1.5V5.5Q4 7 2 8 M7.5 1.5V6.5H10" fill="none" stroke="#A5C25C" stroke-width="0.882"/><path transform="translate(98.20,1.8) scale(1.133)" d="M6 0V11.5L5 12 M3 4L1 9 M9 4L11 9" fill="none" stroke="#A5C25C" stroke-width="0.882"/><path transform="translate(112.20,1.8) scale(1.133)" d="M0.5 2H4.5V10.5H0.5Z M0.5 6H4.5 M5.5 3.5H11.5 M9.5 0.5V11.5L8 12 M6.5 6L8 8" fill="none" stroke="#A5C25C" stroke-width="0.882"/><path transform="translate(126.20,1.8) scale(1.133)" d="M3.5 1Q7 6 3.5 11.5" fill="none" stroke="#A5C25C" stroke-width="0.882"/></svg><span style="color:#A5C25C">"</span><span style="color:#E8BF6A">&gt;</span><svg class="g" width="140" height="22" viewBox="0 0 140 22"><path transform="translate(0.20,1.8) scale(1.133)" d="M0.5 2H5Q4.5 8 0.5 11.5 M1.5 4L5.5 11 M6 2H11.5Q11 8 6.5 11.5 M7 4L11.5 11.5" fill="none" stroke="#C4C4C4" stroke-width="0.882"/><path transform="translate(14.20,1.8) scale(1.133)" d="M6 0V1.5 M1.5 2H11.5 M1.5 2V7Q1.5 10 0.5 11.5 M3.5 5.5H11.5 M7.5 3V12 M7.5 6L3.5 10 M7.5 6L11.5 10" fill="none" stroke="#C4C4C4" stroke-width="0.882"/><path transform="translate(28.20,1.8) scale(1.133)" d="M2 0.5L0.5 3 M1 3H4 M0.5 5.5H4 M2.2 3V11L4 9.5 M5.5 3.5H11.5V8H5.5Z M8.5 0.5V12" fill="none" stroke="#C4C4C4" stroke-width="0.882"/><path transform="translate(42.20,1.8) scale(1.133)" d="M5.5 0V4 M5.5 2H10 M2.5 4.5H9.5V8H2.5Z M1.5 10L0.5 11.5 M4 10L4.5 11.5 M7 10L7.5 11.5 M10 10L11.5 11.5" fill="none" stroke="#C4C4C4" stroke-width="0.882"/><path transform="translate(56.20,1.8) scale(1.133)" d="M5.5 0L6.5 1 M1.5 1.5H11 M1.5 4H11 M11 1.5V4 M1.5 1.5V7Q1.5 10 0.5 12 M6.5 4.5V6 M3 6.5H11.5 M6 6.5Q6 11 3 12 M6 8.5H10Q10 11.5 8.5 12" fill="none" stroke="#C4C4C4" stroke-width="0.882"/><path transform="translate(70.20,1.8) scale(1.133)" d="M8.5 1Q5 6 8.5 11.5" fill="none" stroke="#C4C4C4" stroke-width="0.882"/><path transform="translate(84.20,1.8) scale(1.133)" d="M0.5 1.5H11.5V11H0.5Z M4 1.5V5.5Q4 7 2 8 M7.5 1.5V6.5H10" fill="none" stroke="#C4C4C4" stroke-width="0.882"/><path transform="translate(98.20,1.8) scale(1.133)" d="M6 0V11.5L5 12 M3 4L1 9 M9 4L11 9" fill="none" stroke="#C4C4C4" stroke-width="0.882"/><path transform="translate(112.20,1.8) scale(1.133)" d="M0.5 2H4.5V10.5H0.5Z M0.5 6H4.5 M5.5 3.5H11.5 M9.5 0.5V11.5L8 12 M6.5 6L8 8" fill="none" stroke="#C4C4C4" stroke-width="0.882"/><path transform="translate(126.20,1.8) scale(1.133)" d="M3.5 1Q7 6 3.5 11.5" fill="none" stroke="#C4C4C4" stroke-width="0.882"/></svg><span style="color:#E8BF6A">&lt;/option</span><span style="color:#E8BF6A">&gt;</span></div>
<div class="a m" style="left:273px;top:9px;font-size:12px;line-height:22px;letter-spacing:0px"><span style="color:#E8BF6A">&lt;option</span><span style="color:#BABABA"> value=</span><span style="color:#A5C25C">"</span><svg class="g" width="140" height="22" viewBox="0 0 140 22"><path transform="translate(0.20,1.8) scale(1.133)" d="M1 4H11 M6 0.5V4.5 Q5 9 1 11.5 M6 4.5 Q8 9 11.5 11.5" fill="none" stroke="#A5C25C" stroke-width="0.882"/><path transform="translate(14.20,1.8) scale(1.133)" d="M6 0V1.5 M1.5 2H11.5 M1.5 2V7Q1.5 10 0.5 11.5 M3.5 5.5H11.5 M7.5 3V12 M7.5 6L3.5 10 M7.5 6L11.5 10" fill="none" stroke="#A5C25C" stroke-width="0.882"/><path transform="translate(28.20,1.8) scale(1.133)" d="M2 0.5L0.5 3 M1 3H4 M0.5 5.5H4 M2.2 3V11L4 9.5 M5.5 3.5H11.5V8H5.5Z M8.5 0.5V12" fill="none" stroke="#A5C25C" stroke-width="0.882"/><path transform="translate(42.20,1.8) scale(1.133)" d="M5.5 0V4 M5.5 2H10 M2.5 4.5H9.5V8H2.5Z M1.5 10L0.5 11.5 M4 10L4.5 11.5 M7 10L7.5 11.5 M10 10L11.5 11.5" fill="none" stroke="#A5C25C" stroke-width="0.882"/><path transform="translate(56.20,1.8) scale(1.133)" d="M5.5 0L6.5 1 M1.5 1.5H11 M1.5 4H11 M11 1.5V4 M1.5 1.5V7Q1.5 10 0.5 12 M6.5 4.5V6 M3 6.5H11.5 M6 6.5Q6 11 3 12 M6 8.5H10Q10 11.5 8.5 12" fill="none" stroke="#A5C25C" stroke-width="0.882"/><path transform="translate(70.20,1.8) scale(1.133)" d="M8.5 1Q5 6 8.5 11.5" fill="none" stroke="#A5C25C" stroke-width="0.882"/><path transform="translate(84.20,1.8) scale(1.133)" d="M2 1.5H10 M2.5 6H9.5 M1 11H11" fill="none" stroke="#A5C25C" stroke-width="0.882"/><path transform="translate(98.20,1.8) scale(1.133)" d="M6 0V11.5L5 12 M3 4L1 9 M9 4L11 9" fill="none" stroke="#A5C25C" stroke-width="0.882"/><path transform="translate(112.20,1.8) scale(1.133)" d="M0.5 2H4.5V10.5H0.5Z M0.5 6H4.5 M5.5 3.5H11.5 M9.5 0.5V11.5L8 12 M6.5 6L8 8" fill="none" stroke="#A5C25C" stroke-width="0.882"/><path transform="translate(126.20,1.8) scale(1.133)" d="M3.5 1Q7 6 3.5 11.5" fill="none" stroke="#A5C25C" stroke-width="0.882"/></svg><span style="color:#A5C25C">"</span><span style="color:#E8BF6A">&gt;</span><svg class="g" width="140" height="22" viewBox="0 0 140 22"><path transform="translate(0.20,1.8) scale(1.133)" d="M1 4H11 M6 0.5V4.5 Q5 9 1 11.5 M6 4.5 Q8 9 11.5 11.5" fill="none" stroke="#C4C4C4" stroke-width="0.882"/><path transform="translate(14.20,1.8) scale(1.133)" d="M6 0V1.5 M1.5 2H11.5 M1.5 2V7Q1.5 10 0.5 11.5 M3.5 5.5H11.5 M7.5 3V12 M7.5 6L3.5 10 M7.5 6L11.5 10" fill="none" stroke="#C4C4C4" stroke-width="0.882"/><path transform="translate(28.20,1.8) scale(1.133)" d="M2 0.5L0.5 3 M1 3H4 M0.5 5.5H4 M2.2 3V11L4 9.5 M5.5 3.5H11.5V8H5.5Z M8.5 0.5V12" fill="none" stroke="#C4C4C4" stroke-width="0.882"/><path transform="translate(42.20,1.8) scale(1.133)" d="M5.5 0V4 M5.5 2H10 M2.5 4.5H9.5V8H2.5Z M1.5 10L0.5 11.5 M4 10L4.5 11.5 M7 10L7.5 11.5 M10 10L11.5 11.5" fill="none" stroke="#C4C4C4" stroke-width="0.882"/><path transform="translate(56.20,1.8) scale(1.133)" d="M5.5 0L6.5 1 M1.5 1.5H11 M1.5 4H11 M11 1.5V4 M1.5 1.5V7Q1.5 10 0.5 12 M6.5 4.5V6 M3 6.5H11.5 M6 6.5Q6 11 3 12 M6 8.5H10Q10 11.5 8.5 12" fill="none" stroke="#C4C4C4" stroke-width="0.882"/><path transform="translate(70.20,1.8) scale(1.133)" d="M8.5 1Q5 6 8.5 11.5" fill="none" stroke="#C4C4C4" stroke-width="0.882"/><path transform="translate(84.20,1.8) scale(1.133)" d="M2 1.5H10 M2.5 6H9.5 M1 11H11" fill="none" stroke="#C4C4C4" stroke-width="0.882"/><path transform="translate(98.20,1.8) scale(1.133)" d="M6 0V11.5L5 12 M3 4L1 9 M9 4L11 9" fill="none" stroke="#C4C4C4" stroke-width="0.882"/><path transform="translate(112.20,1.8) scale(1.133)" d="M0.5 2H4.5V10.5H0.5Z M0.5 6H4.5 M5.5 3.5H11.5 M9.5 0.5V11.5L8 12 M6.5 6L8 8" fill="none" stroke="#C4C4C4" stroke-width="0.882"/><path transform="translate(126.20,1.8) scale(1.133)" d="M3.5 1Q7 6 3.5 11.5" fill="none" stroke="#C4C4C4" stroke-width="0.882"/></svg><span style="color:#E8BF6A">&lt;/option</span><span style="color:#E8BF6A">&gt;</span></div>
<div class="a m" style="left:273px;top:31px;font-size:12px;line-height:22px;letter-spacing:0px"><span style="color:#E8BF6A">&lt;option</span><span style="color:#BABABA"> value=</span><span style="color:#A5C25C">"</span><svg class="g" width="140" height="22" viewBox="0 0 140 22"><path transform="translate(0.20,1.8) scale(1.133)" d="M0.5 2H5Q4.5 8 0.5 11.5 M1.5 4L5.5 11 M6 2H11.5Q11 8 6.5 11.5 M7 4L11.5 11.5" fill="none" stroke="#A5C25C" stroke-width="0.882"/><path transform="translate(14.20,1.8) scale(1.133)" d="M6 0V1.5 M1.5 2H11.5 M1.5 2V7Q1.5 10 0.5 11.5 M3.5 5.5H11.5 M7.5 3V12 M7.5 6L3.5 10 M7.5 6L11.5 10" fill="none" stroke="#A5C25C" stroke-width="0.882"/><path transform="translate(28.20,1.8) scale(1.133)" d="M2.5 0.5L0.5 4L3.5 4L0.5 8H4 M0.5 11L4 9.5 M7 0.5L5 4 M6.5 2H10.5L6 7 M7.5 3.5L11.5 7 M8 8L9 9 M7.5 10.5L9.5 11.5" fill="none" stroke="#A5C25C" stroke-width="0.882"/><path transform="translate(42.20,1.8) scale(1.133)" d="M5.5 0V4 M5.5 2H10 M2.5 4.5H9.5V8H2.5Z M1.5 10L0.5 11.5 M4 10L4.5 11.5 M7 10L7.5 11.5 M10 10L11.5 11.5" fill="none" stroke="#A5C25C" stroke-width="0.882"/><path transform="translate(56.20,1.8) scale(1.133)" d="M5.5 0L6.5 1 M1.5 1.5H11 M1.5 4H11 M11 1.5V4 M1.5 1.5V7Q1.5 10 0.5 12 M6.5 4.5V6 M3 6.5H11.5 M6 6.5Q6 11 3 12 M6 8.5H10Q10 11.5 8.5 12" fill="none" stroke="#A5C25C" stroke-width="0.882"/><path transform="translate(70.20,1.8) scale(1.133)" d="M8.5 1Q5 6 8.5 11.5" fill="none" stroke="#A5C25C" stroke-width="0.882"/><path transform="translate(84.20,1.8) scale(1.133)" d="M2 1.5H10 M2.5 6H9.5 M1 11H11" fill="none" stroke="#A5C25C" stroke-width="0.882"/><path transform="translate(98.20,1.8) scale(1.133)" d="M6 0V11.5L5 12 M3 4L1 9 M9 4L11 9" fill="none" stroke="#A5C25C" stroke-width="0.882"/><path transform="translate(112.20,1.8) scale(1.133)" d="M0.5 2H4.5V10.5H0.5Z M0.5 6H4.5 M5.5 3.5H11.5 M9.5 0.5V11.5L8 12 M6.5 6L8 8" fill="none" stroke="#A5C25C" stroke-width="0.882"/><path transform="translate(126.20,1.8) scale(1.133)" d="M3.5 1Q7 6 3.5 11.5" fill="none" stroke="#A5C25C" stroke-width="0.882"/></svg><span style="color:#A5C25C">"</span><span style="color:#E8BF6A">&gt;</span><svg class="g" width="140" height="22" viewBox="0 0 140 22"><path transform="translate(0.20,1.8) scale(1.133)" d="M0.5 2H5Q4.5 8 0.5 11.5 M1.5 4L5.5 11 M6 2H11.5Q11 8 6.5 11.5 M7 4L11.5 11.5" fill="none" stroke="#C4C4C4" stroke-width="0.882"/><path transform="translate(14.20,1.8) scale(1.133)" d="M6 0V1.5 M1.5 2H11.5 M1.5 2V7Q1.5 10 0.5 11.5 M3.5 5.5H11.5 M7.5 3V12 M7.5 6L3.5 10 M7.5 6L11.5 10" fill="none" stroke="#C4C4C4" stroke-width="0.882"/><path transform="translate(28.20,1.8) scale(1.133)" d="M2.5 0.5L0.5 4L3.5 4L0.5 8H4 M0.5 11L4 9.5 M7 0.5L5 4 M6.5 2H10.5L6 7 M7.5 3.5L11.5 7 M8 8L9 9 M7.5 10.5L9.5 11.5" fill="none" stroke="#C4C4C4" stroke-width="0.882"/><path transform="translate(42.20,1.8) scale(1.133)" d="M5.5 0V4 M5.5 2H10 M2.5 4.5H9.5V8H2.5Z M1.5 10L0.5 11.5 M4 10L4.5 11.5 M7 10L7.5 11.5 M10 10L11.5 11.5" fill="none" stroke="#C4C4C4" stroke-width="0.882"/><path transform="translate(56.20,1.8) scale(1.133)" d="M5.5 0L6.5 1 M1.5 1.5H11 M1.5 4H11 M11 1.5V4 M1.5 1.5V7Q1.5 10 0.5 12 M6.5 4.5V6 M3 6.5H11.5 M6 6.5Q6 11 3 12 M6 8.5H10Q10 11.5 8.5 12" fill="none" stroke="#C4C4C4" stroke-width="0.882"/><path transform="translate(70.20,1.8) scale(1.133)" d="M8.5 1Q5 6 8.5 11.5" fill="none" stroke="#C4C4C4" stroke-width="0.882"/><path transform="translate(84.20,1.8) scale(1.133)" d="M2 1.5H10 M2.5 6H9.5 M1 11H11" fill="none" stroke="#C4C4C4" stroke-width="0.882"/><path transform="translate(98.20,1.8) scale(1.133)" d="M6 0V11.5L5 12 M3 4L1 9 M9 4L11 9" fill="none" stroke="#C4C4C4" stroke-width="0.882"/><path transform="translate(112.20,1.8) scale(1.133)" d="M0.5 2H4.5V10.5H0.5Z M0.5 6H4.5 M5.5 3.5H11.5 M9.5 0.5V11.5L8 12 M6.5 6L8 8" fill="none" stroke="#C4C4C4" stroke-width="0.882"/><path transform="translate(126.20,1.8) scale(1.133)" d="M3.5 1Q7 6 3.5 11.5" fill="none" stroke="#C4C4C4" stroke-width="0.882"/></svg><span style="color:#E8BF6A">&lt;/option</span><span style="color:#E8BF6A">&gt;</span></div>
<div class="a m" style="left:245px;top:53px;font-size:12px;line-height:22px;letter-spacing:0px"><span style="color:#E8BF6A">&lt;/select</span><span style="color:#E8BF6A">&gt;</span></div>
<div class="a m" style="left:217px;top:75px;font-size:12px;line-height:22px;letter-spacing:0px"><span style="color:#E8BF6A">&lt;/div</span><span style="color:#E8BF6A">&gt;</span></div>
<div class="a m" style="left:189px;top:97px;font-size:12px;line-height:22px;letter-spacing:0px"><span style="color:#E8BF6A">&lt;/div</span><span style="color:#E8BF6A">&gt;</span></div>
<div class="a m" style="left:189px;top:141px;font-size:12px;line-height:22px;letter-spacing:0px"><span style="color:#E8BF6A">&lt;div</span><span style="color:#BABABA"> class=</span><span style="color:#A5C25C">"layui-form-item"</span><span style="color:#E8BF6A">&gt;</span></div>
<div class="a m" style="left:217px;top:163px;font-size:12px;line-height:22px;letter-spacing:0px"><span style="color:#E8BF6A">&lt;label</span><span style="color:#BABABA"> class=</span><span style="color:#A5C25C">"layui-form-label"</span><span style="color:#E8BF6A">&gt;</span><svg class="g" width="42" height="22" viewBox="0 0 42 22"><path transform="translate(0.20,1.8) scale(1.133)" d="M5.5 0L6.5 1 M1.5 1.5H11 M1.5 4H11 M11 1.5V4 M1.5 1.5V7Q1.5 10 0.5 12 M6.5 4.5V6 M3 6.5H11.5 M6 6.5Q6 11 3 12 M6 8.5H10Q10 11.5 8.5 12" fill="none" stroke="#C4C4C4" stroke-width="0.882"/><path transform="translate(14.20,1.8) scale(1.133)" d="M1.5 0.5L2.5 2 M1 2.5V12 M4 1.5H11.5V11.5L10 12 M4 4.5H8.5V10H4Z M4 7.2H8.5" fill="none" stroke="#C4C4C4" stroke-width="0.882"/><path transform="translate(28.20,1.8) scale(1.133)" d="M3 0.5H9V4H3Z M0.5 6H11.5 M4 6L3 9H10Q10 12 8 12" fill="none" stroke="#C4C4C4" stroke-width="0.882"/></svg><span style="color:#E8BF6A">&lt;/label</span><span style="color:#E8BF6A">&gt;</span></div>
<div class="a m" style="left:217px;top:185px;font-size:12px;line-height:22px;letter-spacing:0px"><span style="color:#E8BF6A">&lt;div</span><span style="color:#BABABA"> class=</span><span style="color:#A5C25C">"layui-input-block"</span><span style="color:#E8BF6A">&gt;</span></div>
<div class="a m" style="left:245px;top:207px;font-size:12px;line-height:22px;letter-spacing:0px"><span style="color:#E8BF6A">&lt;input</span><span style="color:#BABABA"> type=</span><span style="color:#A5C25C">"text"</span><span style="color:#BABABA"> name=</span><span style="color:#A5C25C">"Num"</span><span style="color:#BABABA"> required  placeholder=</span><span style="color:#A5C25C">"</span><svg class="g" width="112" height="22" viewBox="0 0 112 22"><path transform="translate(0.20,1.8) scale(1.133)" d="M1 0.5L2 2 M0.5 4H2V10L3.5 9 M4.5 1.5H11.5 M5.5 3H10.5 M4.5 4.5H11.5 M8 0V4.5 M5.5 6H10.5V12 M5.5 6V12 M5.5 8H10.5 M5.5 10H10.5" fill="none" stroke="#A5C25C" stroke-width="0.882"/><path transform="translate(14.20,1.8) scale(1.133)" d="M0.5 2H4 M2 0.5L1 6H4 M2.5 3.5V12 M0.5 9H4.5 M8 0.5L4.5 4 M8 0.5L11.5 4 M6 4.5H10 M5 6H7.5V12 M5 8.5H7.5 M9 6V10 M11 5.5V12L10 12" fill="none" stroke="#A5C25C" stroke-width="0.882"/><path transform="translate(28.20,1.8) scale(1.133)" d="M4 0.5Q6 1 6 3Q5 9 0.5 12 M6 4Q8 10 11.5 12" fill="none" stroke="#A5C25C" stroke-width="0.882"/><path transform="translate(42.20,1.8) scale(1.133)" d="M1 1H10.5V6H1.5 M1.5 3V10Q1.5 11.5 3 11.5H11.5V9.5" fill="none" stroke="#A5C25C" stroke-width="0.882"/><path transform="translate(56.20,1.8) scale(1.133)" d="M0.5 3H11.5 M5.5 0.5Q4 6 0.5 9 M3 5.5H10V12L9 12 M3 5.5V12 M3 7.5H10 M3 9.5H10" fill="none" stroke="#A5C25C" stroke-width="0.882"/><path transform="translate(70.20,1.8) scale(1.133)" d="M5.5 0L6.5 1 M1.5 1.5H11 M1.5 4H11 M11 1.5V4 M1.5 1.5V7Q1.5 10 0.5 12 M6.5 4.5V6 M3 6.5H11.5 M6 6.5Q6 11 3 12 M6 8.5H10Q10 11.5 8.5 12" fill="none" stroke="#A5C25C" stroke-width="0.882"/><path transform="translate(84.20,1.8) scale(1.133)" d="M1.5 0.5L2.5 2 M1 2.5V12 M4 1.5H11.5V11.5L10 12 M4 4.5H8.5V10H4Z M4 7.2H8.5" fill="none" stroke="#A5C25C" stroke-width="0.882"/><path transform="translate(98.20,1.8) scale(1.133)" d="M3 0.5H9V4H3Z M0.5 6H11.5 M4 6L3 9H10Q10 12 8 12" fill="none" stroke="#A5C25C" stroke-width="0.882"/></svg><span style="color:#A5C25C">"</span><span style="color:#BABABA"> autocomplete=</span><span style="color:#A5C25C">"off"</span><span style="color:#BABABA"> class=</span><span style="color:#A5C25C">"layui-input"</span><span style="color:#E8BF6A">&gt;</span></div>
<div class="a m" style="left:217px;top:229px;font-size:12px;line-height:22px;letter-spacing:0px"><span style="color:#E8BF6A">&lt;/div</span><span style="color:#E8BF6A">&gt;</span></div>
<div class="a m" style="left:217px;top:251px;font-size:12px;line-height:22px;letter-spacing:0px"><span style="color:#E8BF6A">&lt;span</span><span style="color:#E8BF6A">&gt;</span><svg class="g" width="98" height="22" viewBox="0 0 98 22"><path transform="translate(0.20,1.8) scale(1.133)" d="M3.5 1L5 2.5 M3 4.5Q3 10.5 6 11H10Q11 11 11 9 M1.5 5L0.5 9 M9.5 1.5L3.5 11.5 M10 5L11.5 8" fill="none" stroke="#C4C4C4" stroke-width="0.882"/><path transform="translate(14.20,1.8) scale(1.133)" d="M3 0.5L0.5 3 M3 4L0.5 7 M3.5 8L0.5 11.5 M4.5 1H11.5 M7.5 1L7 3 M5 3H11V9H5Z M5 5H11 M5 7H11 M6.5 9.5L4.5 12 M9.5 9.5L11.5 12" fill="none" stroke="#C4C4C4" stroke-width="0.882"/><path transform="translate(28.20,1.8) scale(1.133)" d="M1 1H10.5V6H1.5 M1.5 3V10Q1.5 11.5 3 11.5H11.5V9.5" fill="none" stroke="#C4C4C4" stroke-width="0.882"/><path transform="translate(42.20,1.8) scale(1.133)" d="M0.5 3H11.5 M5.5 0.5Q4 6 0.5 9 M3 5.5H10V12L9 12 M3 5.5V12 M3 7.5H10 M3 9.5H10" fill="none" stroke="#C4C4C4" stroke-width="0.882"/><path transform="translate(56.20,1.8) scale(1.133)" d="M5.5 0L6.5 1 M1.5 1.5H11 M1.5 4H11 M11 1.5V4 M1.5 1.5V7Q1.5 10 0.5 12 M6.5 4.5V6 M3 6.5H11.5 M6 6.5Q6 11 3 12 M6 8.5H10Q10 11.5 8.5 12" fill="none" stroke="#C4C4C4" stroke-width="0.882"/><path transform="translate(70.20,1.8) scale(1.133)" d="M1.5 0.5L2.5 2 M1 2.5V12 M4 1.5H11.5V11.5L10 12 M4 4.5H8.5V10H4Z M4 7.2H8.5" fill="none" stroke="#C4C4C4" stroke-width="0.882"/><path transform="translate(84.20,1.8) scale(1.133)" d="M3 0.5H9V4H3Z M0.5 6H11.5 M4 6L3 9H10Q10 12 8 12" fill="none" stroke="#C4C4C4" stroke-width="0.882"/></svg><span style="color:#E8BF6A">&lt;/span</span><span style="color:#E8BF6A">&gt;</span></div>
<div class="a m" style="left:189px;top:273px;font-size:12px;line-height:22px;letter-spacing:0px"><span style="color:#E8BF6A">&lt;/div</span><span style="color:#E8BF6A">&gt;</span></div>
<div class="a m" style="left:189px;top:317px;font-size:12px;line-height:22px;letter-spacing:0px"><span style="color:#E8BF6A">&lt;div</span><span style="color:#BABABA"> class=</span><span style="color:#A5C25C">"layui-form-item"</span><span style="color:#E8BF6A">&gt;</span></div>
<div class="a m" style="left:217px;top:339px;font-size:12px;line-height:22px;letter-spacing:0px"><span style="color:#E8BF6A">&lt;div</span><span style="color:#BABABA"> class=</span><span style="color:#A5C25C">"layui-input-block"</span><span style="color:#E8BF6A">&gt;</span></div>
<div class="a m" style="left:245px;top:361px;font-size:12px;line-height:22px;letter-spacing:0px"><span style="color:#E8BF6A">&lt;button</span><span style="color:#BABABA"> class=</span><span style="color:#A5C25C">"layui-btn"</span><span style="color:#BABABA"> lay-submit=</span><span style="color:#A5C25C">""</span><span style="color:#E8BF6A">&gt;</span><svg class="g" width="56" height="22" viewBox="0 0 56 22"><path transform="translate(0.20,1.8) scale(1.133)" d="M6 0V2 M1.5 2.5H10.5 M3.5 4L5 9 M8.5 4L7 9 M0.5 11H11.5" fill="none" stroke="#C4C4C4" stroke-width="0.882"/><path transform="translate(14.20,1.8) scale(1.133)" d="M0.5 1H6V6H0.5Z M0.5 3.5H6 M1 1V11L6 8.5 M3 6.5L6 11 M7.5 1H11V8L10 8 M7.5 1V12" fill="none" stroke="#C4C4C4" stroke-width="0.882"/><path transform="translate(28.20,1.8) scale(1.133)" d="M0.5 3.5H4 M2.5 0.5V11.5L1 11 M0.5 9L4 6.5 M5.5 1H11V5.5H5.5Z M5.5 3.2H11 M4.5 7H11.5 M8 7V11.5 M8 9H11 M6 8Q6 11 4.5 12 M6.5 11L11.5 12" fill="none" stroke="#C4C4C4" stroke-width="0.882"/><path transform="translate(42.20,1.8) scale(1.133)" d="M6 0V1.5 M0.5 2.5H11.5 M4 3.5L2 6 M8 3.5L10 6 M3 6L9 12 M9 6L3 12" fill="none" stroke="#C4C4C4" stroke-width="0.882"/></svg><span style="color:#E8BF6A">&lt;/button</span><span style="color:#E8BF6A">&gt;</span></div>
<div class="a m" style="left:245px;top:383px;font-size:12px;line-height:22px;letter-spacing:0px"><span style="color:#E8BF6A">&lt;button</span><span style="color:#BABABA"> class=</span><span style="color:#A5C25C">"layui-btn layui-btn-danger"</span><span style="color:#BABABA"> type=</span><span style="color:#A5C25C">"reset"</span><span style="color:#E8BF6A">&gt;</span><svg class="g" width="56" height="22" viewBox="0 0 56 22"><path transform="translate(0.20,1.8) scale(1.133)" d="M1 1L2 2 M0.5 4L1.5 5 M0.5 11L2.5 7 M4.5 1.5H11.5 M5.5 3H10.5 M4 4.5H11.5 M8 0V4.5 M5.5 6H10.5V12 M5.5 6V12 M5.5 8H10.5 M5.5 10H10.5" fill="none" stroke="#C4C4C4" stroke-width="0.882"/><path transform="translate(14.20,1.8) scale(1.133)" d="M6 0V1.5 M1 4V2H11V4 M4.5 3.5L2 6 M7.5 3.5L10 6 M2.5 7.5H9.5 M6 7.5V11.5 M0.5 11.5H11.5" fill="none" stroke="#C4C4C4" stroke-width="0.882"/><path transform="translate(28.20,1.8) scale(1.133)" d="M1 3H11V12L10 12 M1 3V12 M6 0V5.5L3 8 M6 5.5L9 8" fill="none" stroke="#C4C4C4" stroke-width="0.882"/><path transform="translate(42.20,1.8) scale(1.133)" d="M6 0V1.5 M1 3.5V2H11V3.5 M4 3L2 5 M8 3L10 5 M6 4L1 8.5 M6 4L11 8.5 M3.5 8H8.5V12H3.5Z" fill="none" stroke="#C4C4C4" stroke-width="0.882"/></svg><span style="color:#E8BF6A">&lt;/button</span><span style="color:#E8BF6A">&gt;</span></div>
<div class="a m" style="left:217px;top:405px;font-size:12px;line-height:22px;letter-spacing:0px"><span style="color:#E8BF6A">&lt;/div</span><span style="color:#E8BF6A">&gt;</span></div>
<div class="a m" style="left:189px;top:427px;font-size:12px;line-height:22px;letter-spacing:0px"><span style="color:#E8BF6A">&lt;/div</span><span style="color:#E8BF6A">&gt;</span></div>
<div class="a m" style="left:161px;top:449px;font-size:12px;line-height:22px;letter-spacing:0px"><span style="color:#E8BF6A">&lt;/form</span><span style="color:#E8BF6A">&gt;</span></div>
<div class="a m" style="left:133px;top:493px;font-size:12px;line-height:22px;letter-spacing:0px"><span style="color:#E8BF6A">&lt;/div</span><span style="color:#E8BF6A">&gt;</span></div>
<div class="a m" style="left:105px;top:515px;font-size:12px;line-height:22px;letter-spacing:0px"><span style="color:#E8BF6A">&lt;/div</span><span style="color:#E8BF6A">&gt;</span></div>
<div class="a m" style="left:77px;top:537px;font-size:12px;line-height:22px;letter-spacing:0px"><span style="color:#E8BF6A">&lt;/div</span><span style="color:#E8BF6A">&gt;</span></div>
<div class="a m" style="left:77px;top:559px;font-size:12px;line-height:22px;letter-spacing:0px"><span style="color:#E8BF6A">&lt;script</span><span style="color:#BABABA"> src=</span><span style="color:#A5C25C">"../views/static/admin/js/config.js"</span><span style="color:#E8BF6A">&gt;</span><span style="color:#E8BF6A">&lt;/script</span><span style="color:#E8BF6A">&gt;</span></div>
<div class="a m" style="left:77px;top:581px;font-size:12px;line-height:22px;letter-spacing:0px"><span style="color:#E8BF6A">&lt;script</span><span style="color:#BABABA"> src=</span><span style="color:#A5C25C">"../views/static/admin/js/script.js"</span><span style="color:#E8BF6A">&gt;</span><span style="color:#E8BF6A">&lt;/script</span><span style="color:#E8BF6A">&gt;</span></div>
<svg style="left:273px;top:156px" width="35" height="3" viewBox="0 0 35 3"><path d="M0 1.5 l1.5 -1.5 l1.5 1.5 l1.5 -1.5 l1.5 1.5 l1.5 -1.5 l1.5 1.5 l1.5 -1.5 l1.5 1.5 l1.5 -1.5 l1.5 1.5 l1.5 -1.5 l1.5 1.5 l1.5 -1.5 l1.5 1.5 l1.5 -1.5 l1.5 1.5 l1.5 -1.5 l1.5 1.5 l1.5 -1.5 l1.5 1.5 l1.5 -1.5 l1.5 1.5" stroke="#6A8759" stroke-width="0.8" fill="none"/></svg>
<svg style="left:315px;top:178px" width="35" height="3" viewBox="0 0 35 3"><path d="M0 1.5 l1.5 -1.5 l1.5 1.5 l1.5 -1.5 l1.5 1.5 l1.5 -1.5 l1.5 1.5 l1.5 -1.5 l1.5 1.5 l1.5 -1.5 l1.5 1.5 l1.5 -1.5 l1.5 1.5 l1.5 -1.5 l1.5 1.5 l1.5 -1.5 l1.5 1.5 l1.5 -1.5 l1.5 1.5 l1.5 -1.5 l1.5 1.5 l1.5 -1.5 l1.5 1.5" stroke="#6A8759" stroke-width="0.8" fill="none"/></svg>
<svg style="left:301px;top:200px" width="35" height="3" viewBox="0 0 35 3"><path d="M0 1.5 l1.5 -1.5 l1.5 1.5 l1.5 -1.5 l1.5 1.5 l1.5 -1.5 l1.5 1.5 l1.5 -1.5 l1.5 1.5 l1.5 -1.5 l1.5 1.5 l1.5 -1.5 l1.5 1.5 l1.5 -1.5 l1.5 1.5 l1.5 -1.5 l1.5 1.5 l1.5 -1.5 l1.5 1.5 l1.5 -1.5 l1.5 1.5 l1.5 -1.5 l1.5 1.5" stroke="#6A8759" stroke-width="0.8" fill="none"/></svg>
<svg style="left:924px;top:222px" width="35" height="3" viewBox="0 0 35 3"><path d="M0 1.5 l1.5 -1.5 l1.5 1.5 l1.5 -1.5 l1.5 1.5 l1.5 -1.5 l1.5 1.5 l1.5 -1.5 l1.5 1.5 l1.5 -1.5 l1.5 1.5 l1.5 -1.5 l1.5 1.5 l1.5 -1.5 l1.5 1.5 l1.5 -1.5 l1.5 1.5 l1.5 -1.5 l1.5 1.5 l1.5 -1.5 l1.5 1.5 l1.5 -1.5 l1.5 1.5" stroke="#6A8759" stroke-width="0.8" fill="none"/></svg>
<svg style="left:350px;top:376px" width="35" height="3" viewBox="0 0 35 3"><path d="M0 1.5 l1.5 -1.5 l1.5 1.5 l1.5 -1.5 l1.5 1.5 l1.5 -1.5 l1.5 1.5 l1.5 -1.5 l1.5 1.5 l1.5 -1.5 l1.5 1.5 l1.5 -1.5 l1.5 1.5 l1.5 -1.5 l1.5 1.5 l1.5 -1.5 l1.5 1.5 l1.5 -1.5 l1.5 1.5 l1.5 -1.5 l1.5 1.5 l1.5 -1.5 l1.5 1.5" stroke="#6A8759" stroke-width="0.8" fill="none"/></svg>
<svg style="left:350px;top:398px" width="35" height="3" viewBox="0 0 35 3"><path d="M0 1.5 l1.5 -1.5 l1.5 1.5 l1.5 -1.5 l1.5 1.5 l1.5 -1.5 l1.5 1.5 l1.5 -1.5 l1.5 1.5 l1.5 -1.5 l1.5 1.5 l1.5 -1.5 l1.5 1.5 l1.5 -1.5 l1.5 1.5 l1.5 -1.5 l1.5 1.5 l1.5 -1.5 l1.5 1.5 l1.5 -1.5 l1.5 1.5 l1.5 -1.5 l1.5 1.5" stroke="#6A8759" stroke-width="0.8" fill="none"/></svg>
<svg style="left:420px;top:398px" width="35" height="3" viewBox="0 0 35 3"><path d="M0 1.5 l1.5 -1.5 l1.5 1.5 l1.5 -1.5 l1.5 1.5 l1.5 -1.5 l1.5 1.5 l1.5 -1.5 l1.5 1.5 l1.5 -1.5 l1.5 1.5 l1.5 -1.5 l1.5 1.5 l1.5 -1.5 l1.5 1.5 l1.5 -1.5 l1.5 1.5 l1.5 -1.5 l1.5 1.5 l1.5 -1.5 l1.5 1.5 l1.5 -1.5 l1.5 1.5" stroke="#6A8759" stroke-width="0.8" fill="none"/></svg>
<div class="a" style="left:286px;top:249px;width:2px;height:22px;background:#D0D0D0;"></div>
</div>
<div class="a" style="left:482px;top:683px;width:1382px;height:24px;background:#323334;"></div>
<div class="a" style="left:482px;top:683px;width:1382px;height:1px;background:#323232;"></div>
<div class="a" style="left:561px;top:687px;font-size:13px;line-height:17px;color:#BBB86A;">html</div>
<div class="a" style="left:610px;top:687px;font-size:13px;line-height:17px;color:#C77B7B;">body</div>
<div class="a" style="left:664px;top:687px;font-size:13px;line-height:17px;color:#C07AC0;">div#app</div>
<div class="a" style="left:736px;top:687px;font-size:13px;line-height:17px;color:#8A9AC8;">div#app.main</div>
<div class="a" style="left:839px;top:687px;font-size:13px;line-height:17px;color:#6AA5CF;">div.right</div>
<div class="a" style="left:910px;top:687px;font-size:13px;line-height:17px;color:#6AAB73;">form.layui-form</div>
<div class="a" style="left:1024px;top:687px;font-size:13px;line-height:17px;color:#A9AB6C;">div.layui-form-item</div>
<div class="a" style="left:1157px;top:687px;font-size:13px;line-height:17px;color:#C25B5B;">span</div>
<svg style="left:597px;top:690px" width="5" height="10" viewBox="0 0 5 10"><path d="M0.5 0.5L4.5 5L0.5 9.5" stroke="#5E6163" fill="none"/></svg>
<svg style="left:651px;top:690px" width="5" height="10" viewBox="0 0 5 10"><path d="M0.5 0.5L4.5 5L0.5 9.5" stroke="#5E6163" fill="none"/></svg>
<svg style="left:723px;top:690px" width="5" height="10" viewBox="0 0 5 10"><path d="M0.5 0.5L4.5 5L0.5 9.5" stroke="#5E6163" fill="none"/></svg>
<svg style="left:826px;top:690px" width="5" height="10" viewBox="0 0 5 10"><path d="M0.5 0.5L4.5 5L0.5 9.5" stroke="#5E6163" fill="none"/></svg>
<svg style="left:897px;top:690px" width="5" height="10" viewBox="0 0 5 10"><path d="M0.5 0.5L4.5 5L0.5 9.5" stroke="#5E6163" fill="none"/></svg>
<svg style="left:1011px;top:690px" width="5" height="10" viewBox="0 0 5 10"><path d="M0.5 0.5L4.5 5L0.5 9.5" stroke="#5E6163" fill="none"/></svg>
<svg style="left:1145px;top:690px" width="5" height="10" viewBox="0 0 5 10"><path d="M0.5 0.5L4.5 5L0.5 9.5" stroke="#5E6163" fill="none"/></svg>
<div class="a" style="left:482px;top:707px;width:1382px;height:0px;background:#2B2B2B;"></div>
<div class="a" style="left:719px;top:383px;width:359px;height:90px;background:#4E4A46;border-radius:9px;overflow:hidden">
<div class="a" style="left:249px;top:0;width:110px;height:90px;background:radial-gradient(ellipse 150px 95px at 75% 100%, rgba(0,0,0,0.62) 0%, rgba(0,0,0,0.45) 45%, rgba(0,0,0,0.08) 85%, rgba(0,0,0,0) 100%)"></div>
</div>
<div class="a" style="left:734px;top:396px;font-size:17px;line-height:21px;color:#F4F4F4;font-weight:bold">sh</div>
<div class="a" style="left:751px;top:397px;width:1px;height:17px;background:#F4F4F4;"></div>
<div class="a" style="left:735px;top:426px;font-size:17px;line-height:20px;color:#EDEDED">1.</div>
<div class="a" style="left:746px;top:427px;width:16px;height:16px"><svg class="g" width="16" height="16" viewBox="0 0 16 16"><path transform="translate(0.50,1.0) scale(1.250)" d="M2.5 0.5H9.5V5H2.5Z M2.5 2.8H9.5 M0.5 6.5H11.5 M6 6.5V11 M6 8.5H10 M3.5 8Q3 11 0.5 12 M3.5 10L11.5 12" fill="none" stroke="#EDEDED" stroke-width="1.120"/></svg></div>
<div class="a" style="left:771px;top:426px;font-size:17px;line-height:20px;color:#EDEDED">2.</div>
<div class="a" style="left:784px;top:427px;width:16px;height:16px"><svg class="g" width="16" height="16" viewBox="0 0 16 16"><path transform="translate(0.50,1.0) scale(1.250)" d="M1 0.5L2 2 M0.5 4H2V10L3.5 9 M5.5 0.5L6.5 2 M10.5 0.5L9.5 2 M5 3H11V7H5Z M6.5 7Q6.5 10.5 4.5 12 M9 7V11.5H11.5V10" fill="none" stroke="#EDEDED" stroke-width="1.120"/></svg></div>
<div class="a" style="left:810px;top:426px;font-size:17px;line-height:20px;color:#EDEDED">3.</div>
<div class="a" style="left:821px;top:427px;width:16px;height:16px"><svg class="g" width="16" height="16" viewBox="0 0 16 16"><path transform="translate(0.50,1.0) scale(1.250)" d="M5.5 0.5V11 M5.5 5H10 M0.5 11H11.5" fill="none" stroke="#EDEDED" stroke-width="1.120"/></svg></div>
<div class="a" style="left:848px;top:426px;font-size:17px;line-height:20px;color:#EDEDED">4.</div>
<div class="a" style="left:861px;top:427px;width:32px;height:16px"><svg class="g" width="32" height="16" viewBox="0 0 32 16"><path transform="translate(0.50,1.0) scale(1.250)" d="M0.5 2H4.5V10.5H0.5Z M0.5 6H4.5 M5.5 3.5H11.5 M9.5 0.5V11.5L8 12 M6.5 6L8 8" fill="none" stroke="#EDEDED" stroke-width="1.120"/><path transform="translate(16.50,1.0) scale(1.250)" d="M3 0.5L0.5 5 M2 3.5V12 M4 1.5V6 M5.5 1H11V3 M5.5 4.5H11.5 M6.5 6.5H11 M8.5 4.5V7 M8.5 7Q8 10 5 12 M8.5 8L11.5 12" fill="none" stroke="#EDEDED" stroke-width="1.120"/></svg></div>
<div class="a" style="left:903px;top:426px;font-size:17px;line-height:20px;color:#EDEDED">5.↑</div>
<svg style="left:934px;top:430px" width="7" height="11" viewBox="0 0 7 11"><path d="M6.5 0L0 5.5L6.5 11z" fill="#7C7874"/></svg>
<svg style="left:945px;top:430px" width="7" height="11" viewBox="0 0 7 11"><path d="M0 0L6.5 5.5L0 11z" fill="#F0F0F0"/></svg>
<svg style="left:958px;top:428px" width="15" height="15" viewBox="0 0 15 15"><rect x="0.5" y="0.5" width="14" height="14" rx="1.5" fill="none" stroke="#8E8A86"/><path d="M3.5 6h8l-4 4z" fill="#E0E0E0"/></svg>
<svg style="left:975px;top:385px" width="100" height="86" viewBox="0 0 100 86">
<path d="M35 70 L33 84 L45 84 L48 78 L60 78 L63 84 L72 84 L69 70 Z" fill="#FAFAFA" stroke="#5A2E14" stroke-width="0.8"/>
<path d="M37 48 L70 48 L71 72 L36 72 Z" fill="#FAFAFA"/>
<path d="M36 62 L20 58 M71 62 L86 66" stroke="#FAFAFA" stroke-width="4" stroke-linecap="round"/>
<circle cx="23" cy="45" r="13" fill="#C9854D" stroke="#5A2E14" stroke-width="1"/>
<path d="M11 42q12 7 24 -2M16 33q10 8 4 24M27 33q-4 12 4 22" stroke="#5A2E14" stroke-width="1.1" fill="none"/>
<circle cx="85" cy="53" r="13" fill="#C9854D" stroke="#5A2E14" stroke-width="1"/>
<path d="M73 52q12 -6 24 2M80 41q8 10 0 24M90 41q-6 10 2 23" stroke="#5A2E14" stroke-width="1.1" fill="none"/>
<circle cx="53" cy="36" r="24" fill="#FCFCFC" stroke="#6B3A1E" stroke-width="1"/>
<path d="M43 30l4 2M63 30l-4 2" stroke="#222" stroke-width="1.2"/>
<circle cx="45" cy="35" r="1.6" fill="#222"/><circle cx="62" cy="35" r="1.6" fill="#222"/>
<path d="M49 36q2 3 4 0q2 3 4 0" stroke="#222" stroke-width="1.1" fill="none"/>
<ellipse cx="40" cy="37" rx="3.5" ry="2" fill="#F2C0B0"/><ellipse cx="67" cy="37" rx="3.5" ry="2" fill="#F2C0B0"/>
<path d="M53 12q-8 -3 -9 -7q4 -4 9 2q5 -6 9 -2q-1 4 -9 7z" fill="#A8D8A0"/>
<path d="M93 20l1.5 3 3 .3-2.2 2 .6 3-2.9-1.5-2.9 1.5.6-3-2.2-2 3-.3z" fill="#C8C860"/>
</svg>
<div class="a" style="left:13px;top:707px;width:1851px;height:285px;background:#3D3E40;"></div>
<div class="a" style="left:13px;top:707px;width:1851px;height:1px;background:#2B2B2B;"></div>
<div class="a" style="left:13px;top:732px;width:1851px;height:1px;background:#323232;"></div>
<div class="a" style="left:20px;top:713px;font-size:12px;line-height:16px;color:#BBBBBB;">Run:</div>
<div class="a" style="left:52px;top:708px;width:138px;height:24px;background:#333435;"></div>
<svg style="left:66px;top:713px" width="16" height="16" viewBox="0 0 16 16"><path d="M1 9l4-3 3 1 3-4 2 3-3 4-5 1z" fill="#D9A343"/><path d="M3 11l5-2" stroke="#3A2A10" stroke-width="1"/><circle cx="12" cy="13" r="2.2" fill="#3DB33D"/></svg>
<div class="a" style="left:85px;top:712px;font-size:13px;line-height:17px;color:#BBBBBB;">Tomcat 8.5.46</div>
<svg style="left:172px;top:716px" width="8" height="8" viewBox="0 0 8 8"><path d="M0 0l8 8M8 0L0 8" stroke="#5F6163" stroke-width="1.2"/></svg>
<svg style="left:1842px;top:713px" width="14" height="14" viewBox="0 0 14 14"><circle cx="7" cy="7" r="4.6" fill="none" stroke="#AFB1B3" stroke-width="2.8"/><path d="M7 0v3M7 11v3M0 7h3M11 7h3M2 2l2 2M10 10l2 2M12 2l-2 2M2 12l2-2" stroke="#AFB1B3" stroke-width="2.2"/><circle cx="7" cy="7" r="1.6" fill="#3D3E40"/></svg>
<div class="a" style="left:40px;top:733px;width:1px;height:259px;background:#333435;"></div>
<svg style="left:19px;top:741px" width="16" height="17" viewBox="0 0 16 17"><path d="M9 4.5H7A5 5 0 0 0 2 9.5 5 5 0 0 0 6 14.3" stroke="#59A869" stroke-width="2.2" fill="none"/><path d="M8.5 0.5L14 4.5 8.5 8.5z" fill="#59A869"/><rect x="8" y="10" width="6" height="6" fill="#C8C8C8"/></svg>
<div class="a" style="left:21px;top:768px;width:11px;height:11px;background:#DB5C5C;"></div>
<svg style="left:20px;top:792px" width="13" height="14" viewBox="0 0 13 14"><path d="M11 7a5 5 0 1 1-2.2-4.2" stroke="#AFB1B3" stroke-width="2" fill="none"/><path d="M7 0l5 1-2 5z" fill="#AFB1B3"/></svg>
<div class="a" style="left:17px;top:817px;width:20px;height:1px;background:#4A4D4F;"></div>
<svg style="left:20px;top:827px" width="13" height="11" viewBox="0 0 13 11"><rect x="0" y="0" width="6" height="5" fill="#AFB1B3"/><rect x="7" y="0" width="6" height="5" fill="#AFB1B3"/><rect x="0" y="6" width="13" height="5" fill="#AFB1B3"/></svg>
<div class="a" style="left:17px;top:849px;width:20px;height:1px;background:#4A4D4F;"></div>
<svg style="left:19px;top:858px" width="16" height="16" viewBox="0 0 16 16"><path d="M9 1l6 6-2 .5-3 3 .5 2.5-1.5 1.5-3-3L1 16 0 15l4.5-5-3-3L3 5.5l2.5.5 3-3z" fill="#AFB1B3"/></svg>
<svg style="left:99px;top:740px" width="12" height="11" viewBox="0 0 12 11"><rect x="0" y="0" width="12" height="11" fill="#AFB1B3"/><path d="M3.5 2.5l3 3-3 3" stroke="#3D3E40" stroke-width="1.5" fill="none"/></svg>
<div class="a" style="left:116px;top:738px;font-size:12px;line-height:16px;color:#BBBBBB;">Tomcat Localhost Log</div>
<svg style="left:243px;top:742px" width="7" height="7" viewBox="0 0 7 7"><path d="M0 0l7 7M7 0L0 7" stroke="#5F6163" stroke-width="1.1"/></svg>
<div class="a" style="left:258px;top:733px;width:1px;height:26px;background:#333435;"></div>
<svg style="left:265px;top:740px" width="12" height="11" viewBox="0 0 12 11"><rect x="0" y="0" width="12" height="11" fill="#AFB1B3"/><path d="M3.5 2.5l3 3-3 3" stroke="#3D3E40" stroke-width="1.5" fill="none"/></svg>
<div class="a" style="left:282px;top:738px;font-size:12px;line-height:16px;color:#BBBBBB;">Tomcat Catalina Log</div>
<svg style="left:400px;top:742px" width="7" height="7" viewBox="0 0 7 7"><path d="M0 0l7 7M7 0L0 7" stroke="#5F6163" stroke-width="1.1"/></svg>
<div class="a" style="left:415px;top:733px;width:1px;height:26px;background:#333435;"></div>
<div class="a" style="left:41px;top:759px;width:1823px;height:4px;background:#555A5B;"></div>
<div class="a" style="left:41px;top:733px;width:51px;height:30px;background:#4F5254;"></div>
<div class="a" style="left:52px;top:738px;font-size:12px;line-height:16px;color:#A8A8A8;">Server</div>
<div class="a" style="left:41px;top:763px;width:1823px;height:25px;background:#434D60;"></div>
<div class="a" style="left:47px;top:768px;font-size:12px;line-height:16px;color:#BBBBBB;">Deployment</div>
<div class="a" style="left:410px;top:763px;width:1px;height:25px;background:#3D4552;"></div>
<div class="a" style="left:416px;top:768px;font-size:12px;line-height:16px;color:#BBBBBB;">Output</div>
<div class="a" style="left:70px;top:788px;width:1px;height:204px;background:#333435;"></div>
<svg style="left:48px;top:792px" width="17" height="17" viewBox="0 0 17 17"><path d="M2 6h11M2 11h11" stroke="#499C54" stroke-width="1.8"/><path d="M10 3l4 3-4 3zM5 8l-4 3 4 3z" fill="#499C54"/><path d="M8 0v4M8 13v4" stroke="#499C54" stroke-width="1.5"/></svg>
<svg style="left:48px;top:822px" width="17" height="17" viewBox="0 0 17 17"><path d="M2 6h11M2 11h11" stroke="#55585A" stroke-width="1.8"/><path d="M10 3l4 3-4 3zM5 8l-4 3 4 3z" fill="#55585A"/></svg>
<svg style="left:48px;top:848px" width="16" height="16" viewBox="0 0 16 16"><path d="M13 6a5.5 5.5 0 0 0-10-1M3 10a5.5 5.5 0 0 0 10 1" stroke="#AFB1B3" stroke-width="1.8" fill="none"/><path d="M14 1v5h-5zM2 15v-5h5z" fill="#AFB1B3"/></svg>
<div class="a" style="left:45px;top:871px;width:22px;height:22px;background:#55595C;border-radius:2px"></div>
<svg style="left:48px;top:875px" width="16" height="16" viewBox="0 0 16 16"><rect x="0.5" y="0.5" width="14" height="9" fill="none" stroke="#AFB1B3"/><rect x="1" y="1" width="13" height="2" fill="#AFB1B3"/><path d="M9 6v7M6 10l3 3 3-3" stroke="#499C54" stroke-width="1.6" fill="none"/></svg>
<svg style="left:75px;top:791px" width="12" height="10" viewBox="0 0 12 10"><path d="M1 5l3.5 3.5L11 1" stroke="#59A869" stroke-width="2.8" fill="none"/></svg>
<div class="a" style="left:92px;top:790px;font-size:13px;line-height:17px;color:#BBBBBB;">Hotel_Manage:war exploded</div>
<div class="a" style="left:410px;top:788px;width:1px;height:204px;background:#333435;"></div>
<svg style="left:419px;top:795px" width="12" height="15" viewBox="0 0 12 15"><path d="M6 14V2M1.5 6.5L6 2l4.5 4.5" stroke="#5A5D5F" stroke-width="1.6" fill="none"/></svg>
<svg style="left:419px;top:822px" width="12" height="15" viewBox="0 0 12 15"><path d="M6 1v12M1.5 8.5L6 13l4.5-4.5" stroke="#5A5D5F" stroke-width="1.6" fill="none"/></svg>
<svg style="left:417px;top:849px" width="16" height="16" viewBox="0 0 16 16"><path d="M1 2h14M1 6h12a3 3 0 0 1 0 6H8M1 10h4M1 14h4" stroke="#AFB1B3" stroke-width="1.5" fill="none"/><path d="M9 9.5l-3 2.5 3 2.5z" fill="#AFB1B3"/></svg>
<div class="a" style="left:414px;top:871px;width:22px;height:22px;background:#55595C;border-radius:2px"></div>
<svg style="left:417px;top:874px" width="16" height="16" viewBox="0 0 16 16"><path d="M1 2h5M1 6h5M1 10h5M1 14h14" stroke="#AFB1B3" stroke-width="1.5"/><path d="M11 1v9M7.5 7l3.5 3.5L14.5 7" stroke="#AFB1B3" stroke-width="1.6" fill="none"/></svg>
<svg style="left:417px;top:900px" width="16" height="16" viewBox="0 0 16 16"><rect x="3" y="0" width="10" height="4" fill="#AFB1B3"/><rect x="0" y="5" width="16" height="7" rx="1" fill="#AFB1B3"/><rect x="3" y="9" width="10" height="6" fill="#AFB1B3" stroke="#3D3E40"/></svg>
<svg style="left:418px;top:926px" width="14" height="16" viewBox="0 0 14 16"><rect x="0" y="2" width="14" height="2" fill="#AFB1B3"/><rect x="5" y="0" width="4" height="2" fill="#AFB1B3"/><path d="M1.5 5h11l-1 11h-9z" fill="#AFB1B3"/></svg>
<div class="a" style="left:439px;top:788px;width:1px;height:204px;background:#333435;"></div>
<div class="a" style="left:440px;top:788px;width:1424px;height:204px;background:#2B2B2B;"></div>
<div class="a m" style="left:454px;top:792px;font-size:12px;line-height:22px;letter-spacing:0px;color:#FF6B68">19-Jan-2021 16:26:39.858 <svg class="g" width="42.0" height="22" viewBox="0 0 42.0 22"><path transform="translate(0.20,2.0) scale(1.133)" d="M6 0V1.5 M0.5 2.5H11.5 M4 3.5L2 6 M8 3.5L10 6 M3 6L9 12 M9 6L3 12" fill="none" stroke="#FF6B68" stroke-width="0.882"/><path transform="translate(14.20,2.0) scale(1.133)" d="M1.5 0.8A1 1 0 1 0 1.51 0.8 M11 2.5Q9 1 7 2Q4.5 4 4.5 7Q5 11 8 11.5Q10 11.5 11 10.5" fill="none" stroke="#FF6B68" stroke-width="0.882"/><path transform="translate(28.20,2.0) scale(1.133)" d="M2.5 0.5L0.5 4L3.5 4L0.5 8H4 M0.5 11L4 9.5 M7 0.5L5 4 M6.5 2H10.5L6 7 M7.5 3.5L11.5 7 M8 8L9 9 M7.5 10.5L9.5 11.5" fill="none" stroke="#FF6B68" stroke-width="0.882"/></svg> [localhost-startStop-1] org.apache.catalina.startup.HostConfig.deployDirectory <svg class="g" width="28.0" height="22" viewBox="0 0 28.0 22"><path transform="translate(0.20,2.0) scale(1.133)" d="M3.5 1L5 2.5 M3 4.5Q3 10.5 6 11H10Q11 11 11 9 M1.5 5L0.5 9 M9.5 1.5L3.5 11.5 M10 5L11.5 8" fill="none" stroke="#FF6B68" stroke-width="0.882"/><path transform="translate(14.20,2.0) scale(1.133)" d="M0.5 1H6V6H0.5Z M0.5 3.5H6 M1 1V11L6 8.5 M3 6.5L6 11 M7.5 1H11V8L10 8 M7.5 1V12" fill="none" stroke="#FF6B68" stroke-width="0.882"/></svg>eb <svg class="g" width="196.0" height="22" viewBox="0 0 196.0 22"><path transform="translate(0.20,2.0) scale(1.133)" d="M5.5 0V4 M5.5 2H10 M2.5 4.5H9.5V8H2.5Z M1.5 10L0.5 11.5 M4 10L4.5 11.5 M7 10L7.5 11.5 M10 10L11.5 11.5" fill="none" stroke="#FF6B68" stroke-width="0.882"/><path transform="translate(14.20,2.0) scale(1.133)" d="M0.5 3.5H4 M2.5 0.5V11.5L1 11 M0.5 9L4 6.5 M5.5 1H11V5.5H5.5Z M5.5 3.2H11 M4.5 7H11.5 M8 7V11.5 M8 9H11 M6 8Q6 11 4.5 12 M6.5 11L11.5 12" fill="none" stroke="#FF6B68" stroke-width="0.882"/><path transform="translate(28.20,2.0) scale(1.133)" d="M3 0.5H9V4H3Z M0.5 6H11.5 M4 6L3 9H10Q10 12 8 12" fill="none" stroke="#FF6B68" stroke-width="0.882"/><path transform="translate(42.20,2.0) scale(1.133)" d="M0.5 2H5Q4.5 8 0.5 11.5 M1.5 4L5.5 11 M6 2H11.5Q11 8 6.5 11.5 M7 4L11.5 11.5" fill="none" stroke="#FF6B68" stroke-width="0.882"/><path transform="translate(56.20,2.0) scale(1.133)" d="M1 0.5L2 2 M0.5 4H2V10L3.5 9 M4.5 1.5H11.5 M5.5 3H10.5 M4.5 4.5H11.5 M8 0V4.5 M5.5 6H10.5V12 M5.5 6V12 M5.5 8H10.5 M5.5 10H10.5" fill="none" stroke="#FF6B68" stroke-width="0.882"/><path transform="translate(70.20,2.0) scale(1.133)" d="M1 0.5L2 2 M0.5 4H2V10L3.5 9 M4.5 1.5H11.5 M5.5 3H10.5 M4.5 4.5H11.5 M8 0V4.5 M5.5 6H10.5V12 M5.5 6V12 M5.5 8H10.5 M5.5 10H10.5" fill="none" stroke="#FF6B68" stroke-width="0.882"/><path transform="translate(84.20,2.0) scale(1.133)" d="M0.5 2H5Q4.5 8 0.5 11.5 M1.5 4L5.5 11 M6 2H11.5Q11 8 6.5 11.5 M7 4L11.5 11.5" fill="none" stroke="#FF6B68" stroke-width="0.882"/><path transform="translate(98.20,2.0) scale(1.133)" d="M2 0.5L0.5 3 M1 3H4 M0.5 5.5H4 M2.2 3V11L4 9.5 M5.5 3.5H11.5V8H5.5Z M8.5 0.5V12" fill="none" stroke="#FF6B68" stroke-width="0.882"/><path transform="translate(112.20,2.0) scale(1.133)" d="M3.5 1L5 2.5 M3 4.5Q3 10.5 6 11H10Q11 11 11 9 M1.5 5L0.5 9 M9.5 1.5L3.5 11.5 M10 5L11.5 8" fill="none" stroke="#FF6B68" stroke-width="0.882"/><path transform="translate(126.20,2.0) scale(1.133)" d="M0.5 3.5H4 M2.5 0.5V11.5L1 11 M0.5 9L4 6.5 M5.5 1H11V5.5H5.5Z M5.5 3.2H11 M4.5 7H11.5 M8 7V11.5 M8 9H11 M6 8Q6 11 4.5 12 M6.5 11L11.5 12" fill="none" stroke="#FF6B68" stroke-width="0.882"/><path transform="translate(140.20,2.0) scale(1.133)" d="M0.5 1.5H11.5V11H0.5Z M4 1.5V5.5Q4 7 2 8 M7.5 1.5V6.5H10" fill="none" stroke="#FF6B68" stroke-width="0.882"/><path transform="translate(154.20,2.0) scale(1.133)" d="M0.5 1.5H11.5V11H0.5Z M4 1.5V5.5Q4 7 2 8 M7.5 1.5V6.5H10" fill="none" stroke="#FF6B68" stroke-width="0.882"/><path transform="translate(168.20,2.0) scale(1.133)" d="M6 0V2 M1.5 2.5H10.5 M3.5 4L5 9 M8.5 4L7 9 M0.5 11H11.5" fill="none" stroke="#FF6B68" stroke-width="0.882"/><path transform="translate(182.20,2.0) scale(1.133)" d="M6 0L12 6L6 12L0 6Z" fill="#FF6B68"/></svg> [D:\apache-tomcat-8.5.46\webapps\manager]</div>
<div class="a m" style="left:454px;top:814px;font-size:12px;line-height:22px;letter-spacing:0px;color:#FF6B68">19-Jan-2021 16:26:39.882 <svg class="g" width="42.0" height="22" viewBox="0 0 42.0 22"><path transform="translate(0.20,2.0) scale(1.133)" d="M6 0V1.5 M0.5 2.5H11.5 M4 3.5L2 6 M8 3.5L10 6 M3 6L9 12 M9 6L3 12" fill="none" stroke="#FF6B68" stroke-width="0.882"/><path transform="translate(14.20,2.0) scale(1.133)" d="M1.5 0.8A1 1 0 1 0 1.51 0.8 M11 2.5Q9 1 7 2Q4.5 4 4.5 7Q5 11 8 11.5Q10 11.5 11 10.5" fill="none" stroke="#FF6B68" stroke-width="0.882"/><path transform="translate(28.20,2.0) scale(1.133)" d="M2.5 0.5L0.5 4L3.5 4L0.5 8H4 M0.5 11L4 9.5 M7 0.5L5 4 M6.5 2H10.5L6 7 M7.5 3.5L11.5 7 M8 8L9 9 M7.5 10.5L9.5 11.5" fill="none" stroke="#FF6B68" stroke-width="0.882"/></svg> [localhost-startStop-1] org.apache.catalina.startup.HostConfig.deployDirectory Deployment of web application directory [D:\apache-tomcat-8.5.46\webapps\manager] has finished in [32] ms</div>
<div class="a" style="left:454px;top:983px;width:1335px;height:8px;background:#4D4F50;"></div>
<div class="a" style="left:0px;top:992px;width:1864px;height:24px;background:#3D3E40;"></div>
<div class="a" style="left:0px;top:992px;width:1864px;height:1px;background:#323232;"></div>
<div class="a" style="left:531px;top:993px;width:69px;height:23px;background:#333435;"></div>
<svg style="left:24px;top:996px" width="12" height="12" viewBox="0 0 12 12"><rect x="0" y="0" width="12" height="12" fill="#AFB1B3"/><path d="M3 3l3 2.5L3 8M6 9h3" stroke="#3D3E40" stroke-width="1.3" fill="none"/></svg>
<div class="a" style="left:40px;top:997px;font-size:12px;line-height:16px;color:#BBBBBB;">Terminal</div>
<svg style="left:108px;top:996px" width="14" height="14" viewBox="0 0 14 14"><rect x="0.5" y="0.5" width="11" height="12" fill="none" stroke="#AFB1B3"/><rect x="0" y="0" width="12" height="2" fill="#AFB1B3"/><rect x="4" y="5" width="9" height="8" fill="#3D3E40" stroke="#AFB1B3"/><path d="M6 8h5M6 10.5h5" stroke="#AFB1B3"/></svg>
<div class="a" style="left:124px;top:997px;font-size:12px;line-height:16px;color:#BBBBBB;">Java Enterprise</div>
<svg style="left:224px;top:996px" width="14" height="12" viewBox="0 0 14 12"><path d="M1 11C1 4 6 1 13 1c0 7-4 10-10 10z" fill="#AFB1B3"/><path d="M1 11l8-6" stroke="#3D3E40"/></svg>
<div class="a" style="left:241px;top:997px;font-size:12px;line-height:16px;color:#BBBBBB;">Spring</div>
<svg style="left:298px;top:996px" width="14" height="14" viewBox="0 0 14 14"><rect x="0" y="1" width="5" height="3" fill="#AFB1B3"/><rect x="0" y="6" width="5" height="3" fill="#AFB1B3"/><rect x="0" y="11" width="5" height="3" fill="#AFB1B3"/><path d="M6 4l7 5-7 5z" fill="#AFB1B3"/></svg>
<div class="a" style="left:314px;top:997px;font-size:12px;line-height:16px;color:#BBBBBB;">Application Servers</div>
<svg style="left:440px;top:998px" width="13" height="10" viewBox="0 0 13 10"><path d="M0 1h12M0 5h8M0 9h12" stroke="#AFB1B3" stroke-width="1.6"/></svg>
<div class="a" style="left:456px;top:997px;font-size:12px;line-height:16px;color:#BBBBBB;"><span class="u">0</span>: Messages</div>
<svg style="left:542px;top:996px" width="13" height="14" viewBox="0 0 13 14"><path d="M0 0l10 6.5-10 6.5z" fill="#AFB1B3"/><circle cx="10.5" cy="12" r="2.2" fill="#3DB33D"/></svg>
<div class="a" style="left:557px;top:997px;font-size:12px;line-height:16px;color:#E0E0E0;"><span class="u">4</span>: Run</div>
<svg style="left:614px;top:998px" width="12" height="10" viewBox="0 0 12 10"><path d="M0 1h2M4 1h8M0 5h2M4 5h8M0 9h2M4 9h8" stroke="#AFB1B3" stroke-width="1.6"/></svg>
<div class="a" style="left:629px;top:997px;font-size:12px;line-height:16px;color:#BBBBBB;"><span class="u">6</span>: TODO</div>
<svg style="left:1810px;top:997px" width="14" height="14" viewBox="0 0 14 14"><path d="M7 13H13V7A6 6 0 1 0 7 13z" fill="none" stroke="#AFB1B3" stroke-width="1.3"/></svg>
<div class="a" style="left:1827px;top:997px;font-size:12px;line-height:16px;color:#BBBBBB;">Event Log</div>
<div class="a" style="left:1832px;top:979px;width:34px;height:25px;background:#1F90F2;border-radius:4px 0 0 4px"></div>
<svg style="left:1838px;top:983px" width="20" height="17" viewBox="0 0 20 17"><circle cx="10" cy="5" r="3.2" fill="none" stroke="#fff" stroke-width="2.4"/><circle cx="4.5" cy="11" r="3.2" fill="none" stroke="#fff" stroke-width="2.4"/><path d="M10 8a3.5 3.5 0 0 0 0 6h5.5a3.2 3.2 0 0 0 0-6.2" fill="none" stroke="#fff" stroke-width="2.4"/></svg>
<div class="a" style="left:1862px;top:980px;width:2px;height:23px;background:#D8ECFF;"></div>
</body></html>
